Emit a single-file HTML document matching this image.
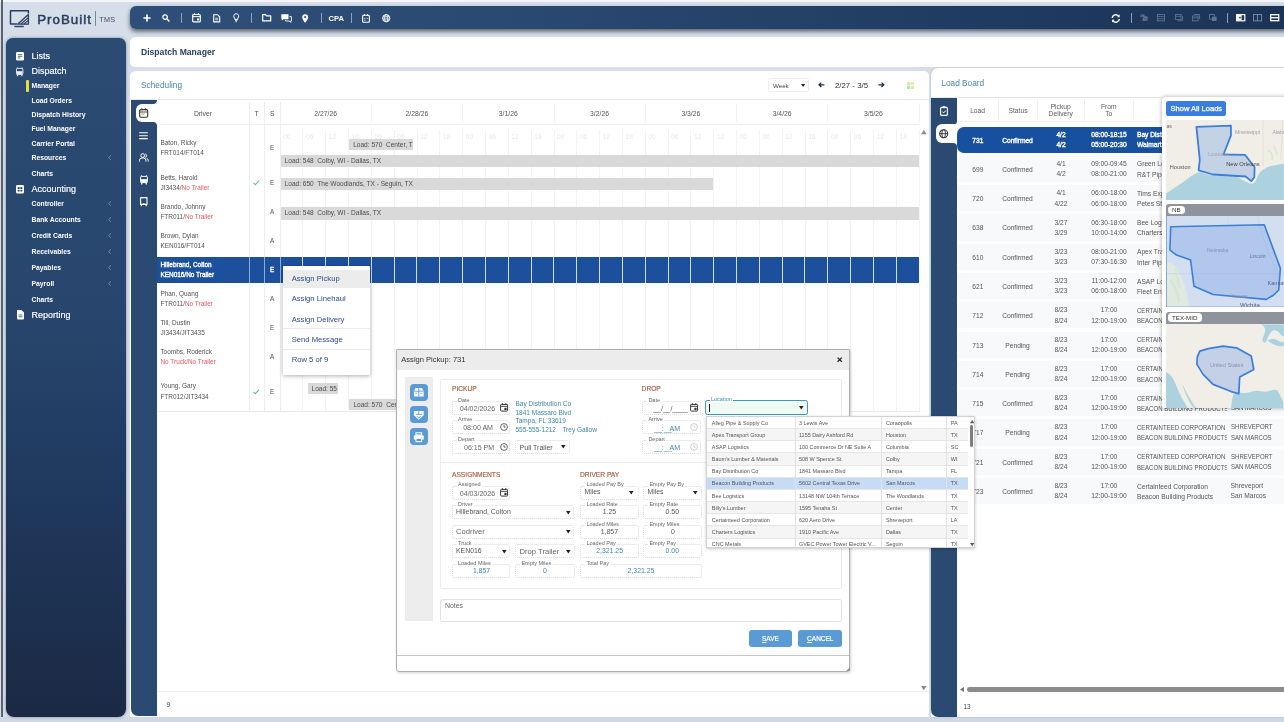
<!DOCTYPE html>
<html lang="en"><head><meta charset="utf-8"><title>ProBuilt TMS - Dispatch Manager</title>
<style>
html,body{margin:0;padding:0;}
html{overflow:hidden;background:#d6dee9;}
body{width:1284px;height:722px;overflow:hidden;position:relative;background:#d6dee9;font-family:"Liberation Sans",sans-serif;filter:blur(0.35px);}
.t{position:absolute;white-space:nowrap;}
.b{position:absolute;box-sizing:border-box;}
svg{position:absolute;overflow:visible;}
</style></head><body>
<div class="b" style="left:0px;top:0px;width:1284px;height:2px;background:#f4f6f9;"></div>
<div class="b" style="left:1px;top:0px;width:1.5px;height:722px;background:#5a6270;"></div>
<div class="b" style="left:0px;top:717px;width:1284px;height:5px;background:#cfd8e4;"></div>
<div class="b" style="left:130px;top:37px;width:1160px;height:29.5px;background:#fff;border-radius:5.5px 0 0 5.5px;"></div>
<div class="t" style="left:141px;top:46.30px;font-size:8.6px;line-height:12.6px;color:#2a4160;font-weight:700;">Dispatch Manager</div>
<svg style="left:9px;top:9px" width="22" height="19" viewBox="0 0 22 19">
<path d="M19.400 4.400V1.700H1.500v13.300h6.400" fill="none" stroke="#2a3f5f" stroke-width="1.5" stroke-linejoin="round"/>
<path d="M8.600 15.200L19.400 5.600v9.600z" fill="none" stroke="#2a3f5f" stroke-width="1.3" stroke-linejoin="round"/>
<path d="M12 15l7-6.200M15 15l4.200-3.700" stroke="#2a3f5f" stroke-width="1.1"/>
<path d="M5.400 17.500h9.400" stroke="#2a3f5f" stroke-width="1.4"/>
</svg>
<div class="t" style="left:37.2px;top:10.65px;font-size:13.3px;line-height:17.3px;color:#2a3f5f;font-weight:400;letter-spacing:1.02px;-webkit-text-stroke:0.5px #2a3f5f;">ProBuilt</div>
<div class="b" style="left:95.2px;top:11px;width:0.9px;height:14.6px;background:#7a8799;"></div>
<div class="t" style="left:99.3px;top:14.00px;font-size:7.2px;line-height:11.2px;color:#3a4c66;font-weight:400;letter-spacing:0.35px;">TMS</div>
<div class="b" style="left:6px;top:38px;width:119.8px;height:678.5px;background:linear-gradient(180deg,#2b4b73 0%,#28466d 40%,#203a60 64%,#1b2944 100%);border-radius:6.5px 6.5px 8px 8px;box-shadow:0 0 3px rgba(30,50,80,.5);"></div>
<div class="t" style="left:31.5px;top:49.90px;font-size:9.0px;line-height:13.0px;color:#fff;font-weight:400;-webkit-text-stroke:0.15px #fff;">Lists</div>
<svg style="left:16px;top:51.7px" width="8" height="8.6" viewBox="0 0 8 8.6"><rect x="0" y="0" width="8" height="8.6" rx="1.3" fill="#fff"/><path d="M1.8 2.6h4.4M1.8 4.3h4.4M1.8 6h2.6" stroke="#2b4c75" stroke-width=".8"/></svg>
<div class="t" style="left:31.5px;top:65.20px;font-size:9.0px;line-height:13.0px;color:#fff;font-weight:400;-webkit-text-stroke:0.15px #fff;">Dispatch</div>
<svg style="left:16.3px;top:66.7px" width="7.4" height="9.6" viewBox="0 0 7.4 9.6"><path d="M1.2 0.3v1.2M6.2 0.3v1.2" stroke="#dfe6f0" stroke-width=".8"/><rect x=".5" y="1.4" width="6.4" height="6.2" rx=".8" fill="none" stroke="#e8edf5" stroke-width=".9"/><path d="M.6 4.6h6.2" stroke="#e8edf5" stroke-width=".9"/><rect x=".9" y="4.8" width="5.6" height="2.6" fill="#e8edf5"/><path d="M1.5 7.6v1.7M5.9 7.6v1.7" stroke="#e8edf5" stroke-width="1.1"/></svg>
<div class="t" style="left:31.5px;top:182.90px;font-size:9.0px;line-height:13.0px;color:#fff;font-weight:400;-webkit-text-stroke:0.15px #fff;">Accounting</div>
<svg style="left:16px;top:184.7px" width="8" height="8.6" viewBox="0 0 8 8.6"><rect x="0" y="0" width="8" height="8.6" rx="1.5" fill="#fff"/><path d="M1.700 2h1.900v1.900H1.700zM4.400 2h1.900v1.900H4.400zM1.700 4.700h1.900v1.900H1.700zM4.400 4.700h1.900v1.900H4.400z" fill="#2b4c75"/></svg>
<div class="t" style="left:31.5px;top:309.10px;font-size:9.0px;line-height:13.0px;color:#fff;font-weight:400;-webkit-text-stroke:0.15px #fff;">Reporting</div>
<svg style="left:16.6px;top:310.4px" width="7" height="9.4" viewBox="0 0 7 9.4"><path d="M.8 0h3.6L7 2.6v6A.8.8 0 0 1 6.2 9.4H.8A.8.8 0 0 1 0 8.6V.8A.8.8 0 0 1 .8 0z" fill="#fff"/><path d="M1.6 5h3.8M1.6 6.8h3.8" stroke="#2b4c75" stroke-width=".8"/></svg>
<div class="t" style="left:31.5px;top:81.40px;font-size:6.8px;line-height:10.8px;color:#fff;font-weight:700;">Manager</div>
<div class="t" style="left:31.5px;top:95.60px;font-size:6.8px;line-height:10.8px;color:#fff;font-weight:700;">Load Orders</div>
<div class="t" style="left:31.5px;top:110.00px;font-size:6.8px;line-height:10.8px;color:#fff;font-weight:700;">Dispatch History</div>
<div class="t" style="left:31.5px;top:124.20px;font-size:6.8px;line-height:10.8px;color:#fff;font-weight:700;">Fuel Manager</div>
<div class="t" style="left:31.5px;top:138.60px;font-size:6.8px;line-height:10.8px;color:#fff;font-weight:700;">Carrier Portal</div>
<div class="t" style="left:31.5px;top:153.20px;font-size:6.8px;line-height:10.8px;color:#fff;font-weight:700;">Resources</div>
<svg style="left:108.3px;top:155.20000000000002px" width="3.4" height="5.2" viewBox="0 0 3.4 5.2"><path d="M2.9 .4L.6 2.6l2.3 2.2" fill="none" stroke="#7f93b3" stroke-width=".9"/></svg>
<div class="t" style="left:31.5px;top:169.40px;font-size:6.8px;line-height:10.8px;color:#fff;font-weight:700;">Charts</div>
<div class="t" style="left:31.5px;top:199.40px;font-size:6.8px;line-height:10.8px;color:#fff;font-weight:700;">Controller</div>
<svg style="left:108.3px;top:201.4px" width="3.4" height="5.2" viewBox="0 0 3.4 5.2"><path d="M2.9 .4L.6 2.6l2.3 2.2" fill="none" stroke="#7f93b3" stroke-width=".9"/></svg>
<div class="t" style="left:31.5px;top:215.40px;font-size:6.8px;line-height:10.8px;color:#fff;font-weight:700;">Bank Accounts</div>
<svg style="left:108.3px;top:217.4px" width="3.4" height="5.2" viewBox="0 0 3.4 5.2"><path d="M2.9 .4L.6 2.6l2.3 2.2" fill="none" stroke="#7f93b3" stroke-width=".9"/></svg>
<div class="t" style="left:31.5px;top:231.20px;font-size:6.8px;line-height:10.8px;color:#fff;font-weight:700;">Credit Cards</div>
<svg style="left:108.3px;top:233.20000000000002px" width="3.4" height="5.2" viewBox="0 0 3.4 5.2"><path d="M2.9 .4L.6 2.6l2.3 2.2" fill="none" stroke="#7f93b3" stroke-width=".9"/></svg>
<div class="t" style="left:31.5px;top:247.10px;font-size:6.8px;line-height:10.8px;color:#fff;font-weight:700;">Receivables</div>
<svg style="left:108.3px;top:249.1px" width="3.4" height="5.2" viewBox="0 0 3.4 5.2"><path d="M2.9 .4L.6 2.6l2.3 2.2" fill="none" stroke="#7f93b3" stroke-width=".9"/></svg>
<div class="t" style="left:31.5px;top:263.10px;font-size:6.8px;line-height:10.8px;color:#fff;font-weight:700;">Payables</div>
<svg style="left:108.3px;top:265.09999999999997px" width="3.4" height="5.2" viewBox="0 0 3.4 5.2"><path d="M2.9 .4L.6 2.6l2.3 2.2" fill="none" stroke="#7f93b3" stroke-width=".9"/></svg>
<div class="t" style="left:31.5px;top:279.10px;font-size:6.8px;line-height:10.8px;color:#fff;font-weight:700;">Payroll</div>
<svg style="left:108.3px;top:281.09999999999997px" width="3.4" height="5.2" viewBox="0 0 3.4 5.2"><path d="M2.9 .4L.6 2.6l2.3 2.2" fill="none" stroke="#7f93b3" stroke-width=".9"/></svg>
<div class="t" style="left:31.5px;top:295.40px;font-size:6.8px;line-height:10.8px;color:#fff;font-weight:700;">Charts</div>
<div class="b" style="left:26px;top:80px;width:2.6px;height:12px;background:#e6e13a;border-radius:1px;"></div>
<div class="b" style="left:130px;top:6px;width:1160px;height:22.7px;background:linear-gradient(90deg,#2e4f79 0%,#2a4970 35%,#203c62 70%,#1b3456 100%);border-radius:6px 0 0 6px;box-shadow:0 2.5px 4px rgba(60,66,78,.8);"></div>
<svg style="left:143.00px;top:14.00px" width="8" height="8" viewBox="0 0 8 8"><path d="M4 .4v7.2M.4 4h7.2" stroke="#fff" stroke-width="1.7"/></svg>
<svg style="left:162.30px;top:13.60px" width="8" height="8" viewBox="0 0 8 8"><circle cx="3.1" cy="3.1" r="2.2" fill="none" stroke="#fff" stroke-width="1.2"/><path d="M4.8 4.8l2.6 2.6" stroke="#fff" stroke-width="1.4"/></svg>
<div class="b" style="left:180.9px;top:13px;width:0.9px;height:9.6px;background:#8fa0bb;"></div>
<div class="b" style="left:250.6px;top:13px;width:0.9px;height:9.6px;background:#8fa0bb;"></div>
<div class="b" style="left:320.6px;top:13px;width:0.9px;height:9.6px;background:#8fa0bb;"></div>
<div class="b" style="left:350.90000000000003px;top:13px;width:0.9px;height:9.6px;background:#8fa0bb;"></div>
<svg style="left:191.80px;top:13.00px" width="9" height="9.6" viewBox="0 0 9 9.6"><rect x=".7" y="1.5" width="7.6" height="7.4" rx="1" fill="none" stroke="#fff" stroke-width="1.2"/><path d="M.7 3.6h7.6" stroke="#fff" stroke-width="1"/><path d="M2.6 .3v1.8M6.4 .3v1.8" stroke="#fff" stroke-width="1.1"/><rect x="5" y="5.4" width="2" height="2" fill="#fff"/></svg>
<svg style="left:212.60px;top:13.70px" width="7.4" height="8.6" viewBox="0 0 7.4 8.6"><path d="M.7 .7h3.9l2.1 2.1v5.1H.7z" fill="none" stroke="#fff" stroke-width="1.1"/><path d="M2.2 4.2h3M2.2 5.8h3" stroke="#fff" stroke-width=".8"/></svg>
<svg style="left:232.80px;top:13.30px" width="6.4" height="9.4" viewBox="0 0 6.4 9.4"><path d="M3.2 .7a2.5 2.5 0 0 1 1.5 4.5v1.2H1.7V5.2A2.5 2.5 0 0 1 3.2 .7z" fill="none" stroke="#fff" stroke-width="1"/><path d="M2 7.6h2.4M2.4 8.8h1.6" stroke="#fff" stroke-width=".8"/></svg>
<svg style="left:261.60px;top:14.20px" width="9.4" height="7.6" viewBox="0 0 9.4 7.6"><path d="M.7 .7h2.9l1 1.2h4.1v5H.7z" fill="none" stroke="#fff" stroke-width="1.2" stroke-linejoin="round"/></svg>
<svg style="left:280.80px;top:13.70px" width="11" height="9" viewBox="0 0 11 9"><path d="M.3 .3h7.2v4.9H2.4L.9 6.6V5.2H.3z" fill="#fff"/><path d="M8.4 2.6h2v4.4h-.7v1.4L8.3 7H4.6v-.9" fill="none" stroke="#fff" stroke-width=".9"/></svg>
<svg style="left:302.20px;top:13.50px" width="6.4" height="9" viewBox="0 0 6.4 9"><path d="M3.2 .2a3 3 0 0 1 3 3c0 2.2-3 5.6-3 5.6S.2 5.4 .2 3.200a3 3 0 0 1 3-3z" fill="#fff"/><circle cx="3.2" cy="3.1" r="1.05" fill="#2a4970"/></svg>
<div class="t" style="left:336.3px;top:12.80px;font-size:7.6px;line-height:11.6px;color:#fff;font-weight:700;transform:translateX(-50%);">CPA</div>
<svg style="left:362.30px;top:13.60px" width="8" height="8.8" viewBox="0 0 8 8.8"><rect x=".6" y="1.2" width="6.8" height="7" rx="1" fill="none" stroke="#fff" stroke-width="1.1"/><path d="M2.4 .2v1.6M5.6 .2v1.6" stroke="#fff" stroke-width="1"/><path d="M2.2 4.4h1.2M4.6 4.4h1.2M2.2 6.2h1.2" stroke="#fff" stroke-width=".9"/></svg>
<svg style="left:382.10px;top:13.80px" width="8.4" height="8.4" viewBox="0 0 8.4 8.4"><circle cx="4.2" cy="4.2" r="3.6" fill="none" stroke="#fff" stroke-width="1"/><ellipse cx="4.2" cy="4.2" rx="1.6" ry="3.6" fill="none" stroke="#fff" stroke-width=".8"/><path d="M.6 4.2h7.2M1.2 2.4h6M1.2 6h6" stroke="#fff" stroke-width=".7"/></svg>
<svg style="left:1111.20px;top:13.50px" width="9.6" height="9" viewBox="0 0 9.6 9"><path d="M1.2 4a3.6 3.6 0 0 1 6.4-1.9" fill="none" stroke="#fff" stroke-width="1.4"/><path d="M8.6 .6v2.6H6z" fill="#fff"/><path d="M8.4 5a3.6 3.6 0 0 1-6.4 1.9" fill="none" stroke="#fff" stroke-width="1.4"/><path d="M1 8.400V5.800h2.600z" fill="#fff"/></svg>
<div class="b" style="left:1130.6px;top:13.2px;width:0.9px;height:9.4px;background:#8fa0bb;"></div>
<div class="b" style="left:1226.8px;top:13.2px;width:0.9px;height:9.4px;background:#8fa0bb;"></div>
<svg style="left:1140.00px;top:14.30px" width="8" height="7.4" viewBox="0 0 8 7.4"><path d="M.4 .6h4v2.400h-4zM2.600 2.200h5v4.800h-5z" fill="#5f7391"/><path d="M.4 .6l6.800 6.400" stroke="#1f3a60" stroke-width=".6"/></svg>
<svg style="left:1157.00px;top:14.30px" width="8" height="7.4" viewBox="0 0 8 7.4"><rect x=".5" y=".5" width="7" height="6.400" fill="none" stroke="#5f7391" stroke-width=".9"/><path d="M.5 2.600h7M.5 4.800h7" stroke="#5f7391" stroke-width=".8"/></svg>
<svg style="left:1174.60px;top:14.30px" width="8" height="7.4" viewBox="0 0 8 7.4"><rect x=".5" y=".5" width="5.600" height="5" fill="none" stroke="#5f7391" stroke-width=".9"/><path d="M.5 2.400h5.600" stroke="#5f7391" stroke-width=".8"/><path d="M2.400 6.800h5.200V2.200" fill="none" stroke="#5f7391" stroke-width=".9"/></svg>
<svg style="left:1192.00px;top:14.30px" width="8" height="7.4" viewBox="0 0 8 7.4"><path d="M2 .5h5.600v4.600" fill="none" stroke="#5f7391" stroke-width=".9"/><rect x=".5" y="2" width="5.600" height="4.900" fill="none" stroke="#5f7391" stroke-width=".9"/><path d="M.5 3.800h5.600" stroke="#5f7391" stroke-width=".8"/></svg>
<svg style="left:1209.40px;top:14.30px" width="8" height="7.4" viewBox="0 0 8 7.4"><rect x=".5" y=".5" width="4.800" height="4.600" fill="none" stroke="#5f7391" stroke-width=".9"/><rect x="3" y="2.800" width="4.600" height="4.200" fill="#5f7391"/></svg>
<svg style="left:1235.70px;top:14.30px" width="9.4" height="7.4" viewBox="0 0 9.4 7.4"><rect x=".6" y=".6" width="8.200" height="6.200" fill="none" stroke="#fff" stroke-width="1.2"/><rect x="1" y="1" width="4.600" height="5.400" fill="#fff"/><rect x="3.200" y="2.800" width="1.600" height="1.600" fill="#203c62"/></svg>
<svg style="left:1253.10px;top:14.30px" width="9" height="7.4" viewBox="0 0 9 7.4"><rect x=".5" y=".5" width="8" height="6.400" fill="none" stroke="#7c8da8" stroke-width=".9"/><path d="M4.500 .5v6.400" stroke="#7c8da8" stroke-width=".9"/></svg>
<svg style="left:1270.30px;top:14.30px" width="9.4" height="7.4" viewBox="0 0 9.4 7.4"><rect x=".7" y=".7" width="8" height="6" fill="none" stroke="#fff" stroke-width="1.3"/><path d="M.7 3.700h8" stroke="#fff" stroke-width="1.3"/></svg>
<div class="b" style="left:130px;top:70.6px;width:799.4px;height:646px;background:#fff;border-radius:6px 5px 0 0;"></div>
<div class="t" style="left:141px;top:79.45px;font-size:8.3px;line-height:12.3px;color:#4689a6;font-weight:400;">Scheduling</div>
<div class="b" style="left:130px;top:99.3px;width:799.4px;height:1px;background:#e4e8ed;"></div>
<div class="b" style="left:130.5px;top:100.2px;width:26.3px;height:616.3px;background:#2b4a72;border-radius:0 0 0 7px;"></div>
<div class="b" style="left:135.5px;top:104px;width:22px;height:18.4px;background:#fff;border-radius:6px 0 0 6px;"></div>
<svg style="left:152.8px;top:100.2px" width="4" height="3.8" viewBox="0 0 4 3.8"><path d="M0 3.800h4V0A4 3.800 0 0 1 0 3.800z" fill="#fff"/></svg>
<svg style="left:152.8px;top:122.4px" width="4" height="3.8" viewBox="0 0 4 3.8"><path d="M0 0h4v3.800A4 3.800 0 0 0 0 0z" fill="#fff"/></svg>
<svg style="left:138.90px;top:108.00px" width="9.4" height="10" viewBox="0 0 9.4 10"><rect x=".7" y="1.600" width="8" height="7.700" rx="1.200" fill="none" stroke="#3a3326" stroke-width="1.1"/><path d="M.7 4h8" stroke="#3a3326" stroke-width=".9"/><path d="M2.800 .3v2M6.600 .3v2" stroke="#3a3326" stroke-width="1"/><path d="M2.400 5.600h1.200v1.200H2.400zM4.200 5.600h1.200v1.200H4.200z" fill="#3a3326" opacity=".55"/></svg>
<svg style="left:139.00px;top:131.90px" width="9" height="7.4" viewBox="0 0 9 7.4"><path d="M.2 .8h8.600M.2 3.700h8.600M.2 6.600h8.600" stroke="#fff" stroke-width="1.1"/></svg>
<svg style="left:138.80px;top:153.10px" width="9.6" height="9" viewBox="0 0 9.6 9"><circle cx="3.700" cy="2.600" r="1.900" fill="none" stroke="#fff" stroke-width="1"/><path d="M.5 8.600V7.400a2.400 2.400 0 0 1 2.400-2.400h1.600a2.400 2.400 0 0 1 2.400 2.400v1.200" fill="none" stroke="#fff" stroke-width="1"/><path d="M6.300 .8a1.900 1.900 0 0 1 0 3.600M7.600 5.200a2.400 2.400 0 0 1 1.600 2.200v1.200" fill="none" stroke="#fff" stroke-width="1"/></svg>
<svg style="left:139.60px;top:174.60px" width="8" height="10" viewBox="0 0 8 10"><path d="M1.400 .2v1.400M6.600 .2v1.400" stroke="#fff" stroke-width=".9"/><rect x=".6" y="1.400" width="6.800" height="6.200" rx=".8" fill="none" stroke="#fff" stroke-width="1"/><path d="M.6 4.600h6.800" stroke="#fff" stroke-width=".9"/><rect x="1" y="4.800" width="6" height="2.600" fill="#fff"/><path d="M1.700 7.600v2M6.300 7.600v2" stroke="#fff" stroke-width="1.200"/></svg>
<svg style="left:139.80px;top:196.60px" width="7.6" height="9.6" viewBox="0 0 7.6 9.6"><path d="M.6 .6h6.400v6.800H.6z" fill="none" stroke="#fff" stroke-width="1.100" stroke-linejoin="round"/><path d="M1.400 7.400v1.800M6.200 7.400v1.800" stroke="#fff" stroke-width="1.100"/><path d="M2.600 7.400l1.200-1.200 1.200 1.200" fill="none" stroke="#fff" stroke-width=".8"/></svg>
<div class="b" style="left:768.3px;top:78.3px;width:40.7px;height:14px;background:#fff;border:1px solid #ebedf0;border-radius:2.5px;"></div>
<div class="t" style="left:773px;top:80.60px;font-size:6.2px;line-height:10.2px;color:#444;font-weight:400;">Week</div>
<svg style="left:801px;top:83.800px" width="4.200" height="3" viewBox="0 0 5 3.6"><path d="M0 0h5L2.500 3.600z" fill="#222"/></svg>
<svg style="left:818.2px;top:82.4px" width="6.8" height="5.6" viewBox="0 0 6.8 5.6"><path d="M6.400 2.800H1.400M3.300 .6L1 2.800l2.300 2.200" fill="none" stroke="#1c2f52" stroke-width="1.3"/></svg>
<svg style="left:878.2px;top:82.4px" width="6.8" height="5.6" viewBox="0 0 6.8 5.6"><path d="M.4 2.800h5M3.500 .6l2.300 2.200-2.300 2.200" fill="none" stroke="#1c2f52" stroke-width="1.3"/></svg>
<div class="t" style="left:851.5px;top:79.80px;font-size:7.8px;line-height:11.8px;color:#333;font-weight:400;transform:translateX(-50%);">2/27 - 3/5</div>
<svg style="left:907px;top:81.6px" width="7" height="7" viewBox="0 0 7 7"><rect x="0" y="0" width="3.200" height="3.200" fill="#d6e7a6"/><rect x="3.800" y="0" width="3.200" height="3.200" fill="#f5e7a3"/><rect x="0" y="3.800" width="3.200" height="3.200" fill="#b7e2b1"/><rect x="3.800" y="3.800" width="3.200" height="3.200" fill="#d9eab0"/></svg>
<div class="b" style="left:157px;top:124.2px;width:762.5px;height:0.9px;background:#eff1f3;"></div>
<div class="t" style="left:203px;top:108.70px;font-size:6.8px;line-height:10.8px;color:#555;font-weight:400;transform:translateX(-50%);">Driver</div>
<div class="t" style="left:256.7px;top:108.70px;font-size:6.8px;line-height:10.8px;color:#555;font-weight:400;transform:translateX(-50%);">T</div>
<div class="t" style="left:272.2px;top:108.70px;font-size:6.8px;line-height:10.8px;color:#555;font-weight:400;transform:translateX(-50%);">S</div>
<div class="t" style="left:325.65px;top:108.70px;font-size:6.8px;line-height:10.8px;color:#555;font-weight:400;transform:translateX(-50%);">2/27/26</div>
<div class="t" style="left:416.95px;top:108.70px;font-size:6.8px;line-height:10.8px;color:#555;font-weight:400;transform:translateX(-50%);">2/28/26</div>
<div class="t" style="left:508.25px;top:108.70px;font-size:6.8px;line-height:10.8px;color:#555;font-weight:400;transform:translateX(-50%);">3/1/26</div>
<div class="t" style="left:599.55px;top:108.70px;font-size:6.8px;line-height:10.8px;color:#555;font-weight:400;transform:translateX(-50%);">3/2/26</div>
<div class="t" style="left:690.8499999999999px;top:108.70px;font-size:6.8px;line-height:10.8px;color:#555;font-weight:400;transform:translateX(-50%);">3/3/26</div>
<div class="t" style="left:782.15px;top:108.70px;font-size:6.8px;line-height:10.8px;color:#555;font-weight:400;transform:translateX(-50%);">3/4/26</div>
<div class="t" style="left:873.4499999999999px;top:108.70px;font-size:6.8px;line-height:10.8px;color:#555;font-weight:400;transform:translateX(-50%);">3/5/26</div>
<div class="b" style="left:248.6px;top:102px;width:0.9px;height:309px;background:#eceef1;"></div>
<div class="b" style="left:263.90000000000003px;top:102px;width:0.9px;height:309px;background:#eceef1;"></div>
<div class="b" style="left:279.6px;top:102px;width:0.9px;height:309px;background:#eceef1;"></div>
<div class="b" style="left:370.90000000000003px;top:104px;width:0.9px;height:18px;background:#eef0f2;"></div>
<div class="b" style="left:462.20000000000005px;top:104px;width:0.9px;height:18px;background:#eef0f2;"></div>
<div class="b" style="left:553.5px;top:104px;width:0.9px;height:18px;background:#eef0f2;"></div>
<div class="b" style="left:644.8000000000001px;top:104px;width:0.9px;height:18px;background:#eef0f2;"></div>
<div class="b" style="left:736.1px;top:104px;width:0.9px;height:18px;background:#eef0f2;"></div>
<div class="b" style="left:827.4px;top:104px;width:0.9px;height:18px;background:#eef0f2;"></div>
<div class="b" style="left:918.7px;top:104px;width:0.9px;height:18px;background:#eef0f2;"></div>
<div class="b" style="left:302.425px;top:130px;width:0.9px;height:281px;background:#f3f3f5;"></div>
<div class="b" style="left:325.25px;top:130px;width:0.9px;height:281px;background:#f3f3f5;"></div>
<div class="b" style="left:348.07500000000005px;top:130px;width:0.9px;height:281px;background:#f3f3f5;"></div>
<div class="b" style="left:370.90000000000003px;top:130px;width:0.9px;height:281px;background:#f3f3f5;"></div>
<div class="b" style="left:393.725px;top:130px;width:0.9px;height:281px;background:#f3f3f5;"></div>
<div class="b" style="left:416.55px;top:130px;width:0.9px;height:281px;background:#f3f3f5;"></div>
<div class="b" style="left:439.375px;top:130px;width:0.9px;height:281px;background:#f3f3f5;"></div>
<div class="b" style="left:462.20000000000005px;top:130px;width:0.9px;height:281px;background:#f3f3f5;"></div>
<div class="b" style="left:485.025px;top:130px;width:0.9px;height:281px;background:#f3f3f5;"></div>
<div class="b" style="left:507.85px;top:130px;width:0.9px;height:281px;background:#f3f3f5;"></div>
<div class="b" style="left:530.6750000000001px;top:130px;width:0.9px;height:281px;background:#f3f3f5;"></div>
<div class="b" style="left:553.5px;top:130px;width:0.9px;height:281px;background:#f3f3f5;"></div>
<div class="b" style="left:576.3249999999999px;top:130px;width:0.9px;height:281px;background:#f3f3f5;"></div>
<div class="b" style="left:599.15px;top:130px;width:0.9px;height:281px;background:#f3f3f5;"></div>
<div class="b" style="left:621.975px;top:130px;width:0.9px;height:281px;background:#f3f3f5;"></div>
<div class="b" style="left:644.8000000000001px;top:130px;width:0.9px;height:281px;background:#f3f3f5;"></div>
<div class="b" style="left:667.625px;top:130px;width:0.9px;height:281px;background:#f3f3f5;"></div>
<div class="b" style="left:690.4499999999999px;top:130px;width:0.9px;height:281px;background:#f3f3f5;"></div>
<div class="b" style="left:713.275px;top:130px;width:0.9px;height:281px;background:#f3f3f5;"></div>
<div class="b" style="left:736.1px;top:130px;width:0.9px;height:281px;background:#f3f3f5;"></div>
<div class="b" style="left:758.9250000000001px;top:130px;width:0.9px;height:281px;background:#f3f3f5;"></div>
<div class="b" style="left:781.75px;top:130px;width:0.9px;height:281px;background:#f3f3f5;"></div>
<div class="b" style="left:804.575px;top:130px;width:0.9px;height:281px;background:#f3f3f5;"></div>
<div class="b" style="left:827.4px;top:130px;width:0.9px;height:281px;background:#f3f3f5;"></div>
<div class="b" style="left:850.225px;top:130px;width:0.9px;height:281px;background:#f3f3f5;"></div>
<div class="b" style="left:873.05px;top:130px;width:0.9px;height:281px;background:#f3f3f5;"></div>
<div class="b" style="left:895.875px;top:130px;width:0.9px;height:281px;background:#f3f3f5;"></div>
<div class="b" style="left:918.7px;top:130px;width:0.9px;height:281px;background:#f3f3f5;"></div>
<div class="t" style="left:283.2px;top:132.30px;font-size:6.6px;line-height:10.6px;color:#e6e8ec;font-weight:400;">00</div>
<div class="t" style="left:306.025px;top:132.30px;font-size:6.6px;line-height:10.6px;color:#e6e8ec;font-weight:400;">06</div>
<div class="t" style="left:328.84999999999997px;top:132.30px;font-size:6.6px;line-height:10.6px;color:#e6e8ec;font-weight:400;">12</div>
<div class="t" style="left:351.675px;top:132.30px;font-size:6.6px;line-height:10.6px;color:#e6e8ec;font-weight:400;">18</div>
<div class="t" style="left:374.5px;top:132.30px;font-size:6.6px;line-height:10.6px;color:#e6e8ec;font-weight:400;">00</div>
<div class="t" style="left:397.325px;top:132.30px;font-size:6.6px;line-height:10.6px;color:#e6e8ec;font-weight:400;">06</div>
<div class="t" style="left:420.15px;top:132.30px;font-size:6.6px;line-height:10.6px;color:#e6e8ec;font-weight:400;">12</div>
<div class="t" style="left:442.97499999999997px;top:132.30px;font-size:6.6px;line-height:10.6px;color:#e6e8ec;font-weight:400;">18</div>
<div class="t" style="left:465.8px;top:132.30px;font-size:6.6px;line-height:10.6px;color:#e6e8ec;font-weight:400;">00</div>
<div class="t" style="left:488.62499999999994px;top:132.30px;font-size:6.6px;line-height:10.6px;color:#e6e8ec;font-weight:400;">06</div>
<div class="t" style="left:511.45px;top:132.30px;font-size:6.6px;line-height:10.6px;color:#e6e8ec;font-weight:400;">12</div>
<div class="t" style="left:534.2750000000001px;top:132.30px;font-size:6.6px;line-height:10.6px;color:#e6e8ec;font-weight:400;">18</div>
<div class="t" style="left:557.1px;top:132.30px;font-size:6.6px;line-height:10.6px;color:#e6e8ec;font-weight:400;">00</div>
<div class="t" style="left:579.925px;top:132.30px;font-size:6.6px;line-height:10.6px;color:#e6e8ec;font-weight:400;">06</div>
<div class="t" style="left:602.75px;top:132.30px;font-size:6.6px;line-height:10.6px;color:#e6e8ec;font-weight:400;">12</div>
<div class="t" style="left:625.575px;top:132.30px;font-size:6.6px;line-height:10.6px;color:#e6e8ec;font-weight:400;">18</div>
<div class="t" style="left:648.4000000000001px;top:132.30px;font-size:6.6px;line-height:10.6px;color:#e6e8ec;font-weight:400;">00</div>
<div class="t" style="left:671.225px;top:132.30px;font-size:6.6px;line-height:10.6px;color:#e6e8ec;font-weight:400;">06</div>
<div class="t" style="left:694.05px;top:132.30px;font-size:6.6px;line-height:10.6px;color:#e6e8ec;font-weight:400;">12</div>
<div class="t" style="left:716.875px;top:132.30px;font-size:6.6px;line-height:10.6px;color:#e6e8ec;font-weight:400;">18</div>
<div class="t" style="left:739.7px;top:132.30px;font-size:6.6px;line-height:10.6px;color:#e6e8ec;font-weight:400;">00</div>
<div class="t" style="left:762.5250000000001px;top:132.30px;font-size:6.6px;line-height:10.6px;color:#e6e8ec;font-weight:400;">06</div>
<div class="t" style="left:785.35px;top:132.30px;font-size:6.6px;line-height:10.6px;color:#e6e8ec;font-weight:400;">12</div>
<div class="t" style="left:808.1750000000001px;top:132.30px;font-size:6.6px;line-height:10.6px;color:#e6e8ec;font-weight:400;">18</div>
<div class="t" style="left:831.0px;top:132.30px;font-size:6.6px;line-height:10.6px;color:#e6e8ec;font-weight:400;">00</div>
<div class="t" style="left:853.825px;top:132.30px;font-size:6.6px;line-height:10.6px;color:#e6e8ec;font-weight:400;">06</div>
<div class="t" style="left:876.65px;top:132.30px;font-size:6.6px;line-height:10.6px;color:#e6e8ec;font-weight:400;">12</div>
<div class="t" style="left:899.475px;top:132.30px;font-size:6.6px;line-height:10.6px;color:#e6e8ec;font-weight:400;">18</div>
<div class="b" style="left:156.8px;top:257.2px;width:762.5px;height:26px;background:#1c4f9c;"></div>
<div class="b" style="left:248.9px;top:257.2px;width:0.9px;height:26px;background:#8fabd6;"></div>
<div class="b" style="left:264.2px;top:257.2px;width:0.9px;height:26px;background:#8fabd6;"></div>
<div class="b" style="left:279.9px;top:257.2px;width:0.9px;height:26px;background:#8fabd6;"></div>
<div class="b" style="left:302.325px;top:257.2px;width:1px;height:26px;background:#d3def0;"></div>
<div class="b" style="left:325.15px;top:257.2px;width:1px;height:26px;background:#d3def0;"></div>
<div class="b" style="left:347.975px;top:257.2px;width:1px;height:26px;background:#d3def0;"></div>
<div class="b" style="left:370.8px;top:257.2px;width:1px;height:26px;background:#d3def0;"></div>
<div class="b" style="left:393.625px;top:257.2px;width:1px;height:26px;background:#d3def0;"></div>
<div class="b" style="left:416.45px;top:257.2px;width:1px;height:26px;background:#d3def0;"></div>
<div class="b" style="left:439.275px;top:257.2px;width:1px;height:26px;background:#d3def0;"></div>
<div class="b" style="left:462.1px;top:257.2px;width:1px;height:26px;background:#d3def0;"></div>
<div class="b" style="left:484.92499999999995px;top:257.2px;width:1px;height:26px;background:#d3def0;"></div>
<div class="b" style="left:507.75px;top:257.2px;width:1px;height:26px;background:#d3def0;"></div>
<div class="b" style="left:530.575px;top:257.2px;width:1px;height:26px;background:#d3def0;"></div>
<div class="b" style="left:553.4px;top:257.2px;width:1px;height:26px;background:#d3def0;"></div>
<div class="b" style="left:576.2249999999999px;top:257.2px;width:1px;height:26px;background:#d3def0;"></div>
<div class="b" style="left:599.05px;top:257.2px;width:1px;height:26px;background:#d3def0;"></div>
<div class="b" style="left:621.875px;top:257.2px;width:1px;height:26px;background:#d3def0;"></div>
<div class="b" style="left:644.7px;top:257.2px;width:1px;height:26px;background:#d3def0;"></div>
<div class="b" style="left:667.525px;top:257.2px;width:1px;height:26px;background:#d3def0;"></div>
<div class="b" style="left:690.3499999999999px;top:257.2px;width:1px;height:26px;background:#d3def0;"></div>
<div class="b" style="left:713.175px;top:257.2px;width:1px;height:26px;background:#d3def0;"></div>
<div class="b" style="left:736.0px;top:257.2px;width:1px;height:26px;background:#d3def0;"></div>
<div class="b" style="left:758.825px;top:257.2px;width:1px;height:26px;background:#d3def0;"></div>
<div class="b" style="left:781.65px;top:257.2px;width:1px;height:26px;background:#d3def0;"></div>
<div class="b" style="left:804.475px;top:257.2px;width:1px;height:26px;background:#d3def0;"></div>
<div class="b" style="left:827.3px;top:257.2px;width:1px;height:26px;background:#d3def0;"></div>
<div class="b" style="left:850.125px;top:257.2px;width:1px;height:26px;background:#d3def0;"></div>
<div class="b" style="left:872.9499999999999px;top:257.2px;width:1px;height:26px;background:#d3def0;"></div>
<div class="b" style="left:895.775px;top:257.2px;width:1px;height:26px;background:#d3def0;"></div>
<div class="t" style="left:160.4px;top:138.18px;font-size:6.45px;line-height:10.45px;color:#525252;font-weight:400;">Baton, Ricky</div>
<div class="t" style="left:160.4px;top:148.38px;font-size:6.45px;line-height:10.45px;color:#525252;font-weight:400;">FRT014/FT014</div>
<div class="t" style="left:272.2px;top:143.30px;font-size:6.4px;line-height:10.4px;color:#525252;font-weight:400;transform:translateX(-50%);">E</div>
<div class="t" style="left:160.4px;top:172.68px;font-size:6.45px;line-height:10.45px;color:#525252;font-weight:400;">Betts, Harold</div>
<div class="t" style="left:160.4px;top:182.88px;font-size:6.45px;line-height:10.45px;color:#525252;font-weight:400;">JI3434/<span style="color:#e5565c">No Trailer</span></div>
<div class="t" style="left:272.2px;top:177.80px;font-size:6.4px;line-height:10.4px;color:#525252;font-weight:400;transform:translateX(-50%);">E</div>
<svg style="left:253.4px;top:179.9px" width="6.6" height="5.4" viewBox="0 0 6.6 5.4"><path d="M.5 2.900l1.900 1.800L6.100 .6" fill="none" stroke="#66c07f" stroke-width="1.1"/></svg>
<div class="t" style="left:160.4px;top:201.78px;font-size:6.45px;line-height:10.45px;color:#525252;font-weight:400;">Brando, Johnny</div>
<div class="t" style="left:160.4px;top:211.97px;font-size:6.45px;line-height:10.45px;color:#525252;font-weight:400;">FTR011/<span style="color:#e5565c">No Trailer</span></div>
<div class="t" style="left:272.2px;top:206.90px;font-size:6.4px;line-height:10.4px;color:#525252;font-weight:400;transform:translateX(-50%);">A</div>
<div class="t" style="left:160.4px;top:230.78px;font-size:6.45px;line-height:10.45px;color:#525252;font-weight:400;">Brown, Dylan</div>
<div class="t" style="left:160.4px;top:240.97px;font-size:6.45px;line-height:10.45px;color:#525252;font-weight:400;">KEN016/FT014</div>
<div class="t" style="left:272.2px;top:235.90px;font-size:6.4px;line-height:10.4px;color:#525252;font-weight:400;transform:translateX(-50%);">A</div>
<div class="t" style="left:160.4px;top:260.17px;font-size:6.45px;line-height:10.45px;color:#fff;font-weight:400;-webkit-text-stroke:0.35px #fff;">Hillebrand, Colton</div>
<div class="t" style="left:160.4px;top:270.37px;font-size:6.45px;line-height:10.45px;color:#fff;font-weight:400;-webkit-text-stroke:0.35px #fff;">KEN016/No Trailer</div>
<div class="t" style="left:272.2px;top:265.30px;font-size:6.4px;line-height:10.4px;color:#fff;font-weight:400;transform:translateX(-50%);-webkit-text-stroke:0.35px #fff;">E</div>
<div class="t" style="left:160.4px;top:288.67px;font-size:6.45px;line-height:10.45px;color:#525252;font-weight:400;">Phan, Quang</div>
<div class="t" style="left:160.4px;top:298.87px;font-size:6.45px;line-height:10.45px;color:#525252;font-weight:400;">FTR011/<span style="color:#e5565c">No Trailer</span></div>
<div class="t" style="left:272.2px;top:293.80px;font-size:6.4px;line-height:10.4px;color:#525252;font-weight:400;transform:translateX(-50%);">A</div>
<div class="t" style="left:160.4px;top:317.67px;font-size:6.45px;line-height:10.45px;color:#525252;font-weight:400;">Till, Dustin</div>
<div class="t" style="left:160.4px;top:327.87px;font-size:6.45px;line-height:10.45px;color:#525252;font-weight:400;">JI3434/JIT3435</div>
<div class="t" style="left:272.2px;top:322.80px;font-size:6.4px;line-height:10.4px;color:#525252;font-weight:400;transform:translateX(-50%);">E</div>
<div class="t" style="left:160.4px;top:346.67px;font-size:6.45px;line-height:10.45px;color:#525252;font-weight:400;">Toombs, Roderick</div>
<div class="t" style="left:160.4px;top:356.87px;font-size:6.45px;line-height:10.45px;color:#525252;font-weight:400;"><span style="color:#e5565c">No Truck/No Trailer</span></div>
<div class="t" style="left:272.2px;top:351.80px;font-size:6.4px;line-height:10.4px;color:#525252;font-weight:400;transform:translateX(-50%);">A</div>
<div class="t" style="left:160.4px;top:381.37px;font-size:6.45px;line-height:10.45px;color:#525252;font-weight:400;">Young, Gary</div>
<div class="t" style="left:160.4px;top:391.57px;font-size:6.45px;line-height:10.45px;color:#525252;font-weight:400;">FTR012/JIT3434</div>
<div class="t" style="left:272.2px;top:386.50px;font-size:6.4px;line-height:10.4px;color:#525252;font-weight:400;transform:translateX(-50%);">E</div>
<svg style="left:253.4px;top:388.59999999999997px" width="6.6" height="5.4" viewBox="0 0 6.6 5.4"><path d="M.5 2.900l1.900 1.800L6.100 .6" fill="none" stroke="#66c07f" stroke-width="1.1"/></svg>
<div class="b" style="left:349.2px;top:138.5px;width:64.0px;height:11.900000000000006px;background:#d9d9d9;overflow:hidden;"><div class="t" style="left:4px;top:0;font-size:6.55px;line-height:11.900000000000006px;color:#4c4c4c;white-space:pre;">Load: 570  Center, TX - Dallas, TX</div></div>
<div class="b" style="left:280.6px;top:155px;width:638.4px;height:12px;background:#d9d9d9;overflow:hidden;"><div class="t" style="left:4px;top:0;font-size:6.55px;line-height:12px;color:#4c4c4c;white-space:pre;">Load: 548  Colby, WI - Dallas, TX</div></div>
<div class="b" style="left:280.6px;top:178.3px;width:432.9px;height:11.899999999999977px;background:#d9d9d9;overflow:hidden;"><div class="t" style="left:4px;top:0;font-size:6.55px;line-height:11.899999999999977px;color:#4c4c4c;white-space:pre;">Load: 650  The Woodlands, TX - Seguin, TX</div></div>
<div class="b" style="left:280.6px;top:207.4px;width:638.4px;height:12.199999999999989px;background:#d9d9d9;overflow:hidden;"><div class="t" style="left:4px;top:0;font-size:6.55px;line-height:12.199999999999989px;color:#4c4c4c;white-space:pre;">Load: 548  Colby, WI - Dallas, TX</div></div>
<div class="b" style="left:307.5px;top:383.2px;width:30.80000000000001px;height:11.0px;background:#d9d9d9;overflow:hidden;"><div class="t" style="left:4px;top:0;font-size:6.55px;line-height:11.0px;color:#4c4c4c;white-space:pre;">Load: 55</div></div>
<div class="b" style="left:349.4px;top:399px;width:70.60000000000002px;height:11.399999999999977px;background:#d9d9d9;overflow:hidden;"><div class="t" style="left:4px;top:0;font-size:6.55px;line-height:11.399999999999977px;color:#4c4c4c;white-space:pre;">Load: 570  Center, TX</div></div>
<div class="b" style="left:157px;top:410.6px;width:762.5px;height:0.9px;background:#e9ebee;"></div>
<svg style="left:920.700px;top:130.200px" width="5.6" height="4.2" viewBox="0 0 5.6 4.2"><path d="M0 4.200h5.600L2.800 0z" fill="#8a8a8a"/></svg>
<svg style="left:920.700px;top:686px" width="5.6" height="4.2" viewBox="0 0 5.6 4.2"><path d="M0 0h5.600L2.800 4.200z" fill="#8a8a8a"/></svg>
<div class="b" style="left:157px;top:691.3px;width:772.4px;height:0.9px;background:#eceef1;"></div>
<div class="t" style="left:166.6px;top:700.15px;font-size:6.5px;line-height:10.5px;color:#444;font-weight:400;">9</div>
<div class="b" style="left:930.8px;top:67.6px;width:360px;height:649px;background:#fff;border-radius:7px 0 0 0;box-shadow:0 0 1.5px rgba(120,135,160,.7);"></div>
<div class="t" style="left:941.3px;top:76.75px;font-size:8.3px;line-height:12.3px;color:#4689a6;font-weight:400;">Load Board</div>
<div class="b" style="left:931px;top:96.8px;width:360px;height:1px;background:#e4e8ed;"></div>
<div class="b" style="left:931.2px;top:97.6px;width:26px;height:619px;background:#2b4a72;border-radius:0 0 0 7px;"></div>
<div class="b" style="left:935.8px;top:124.3px;width:21.6px;height:18.4px;background:#fff;border-radius:6px 0 0 6px;"></div>
<svg style="left:953.2px;top:120.5px" width="4" height="3.8" viewBox="0 0 4 3.8"><path d="M0 3.800h4V0A4 3.800 0 0 1 0 3.800z" fill="#fff"/></svg>
<svg style="left:953.2px;top:142.7px" width="4" height="3.8" viewBox="0 0 4 3.8"><path d="M0 0h4v3.800A4 3.800 0 0 0 0 0z" fill="#fff"/></svg>
<svg style="left:940.00px;top:105.60px" width="8" height="10" viewBox="0 0 8 10"><rect x=".6" y="1.400" width="6.800" height="8" rx="1" fill="none" stroke="#fff" stroke-width="1.1"/><rect x="2.400" y=".3" width="3.200" height="2" rx=".5" fill="#fff"/><path d="M2.300 5.600l1.300 1.300 2.200-2.400" fill="none" stroke="#fff" stroke-width="1"/></svg>
<svg style="left:939.30px;top:128.50px" width="9.4" height="9.4" viewBox="0 0 9.4 9.4"><circle cx="4.700" cy="4.700" r="4" fill="none" stroke="#2d2d2d" stroke-width="1.05"/><ellipse cx="4.700" cy="4.700" rx="1.800" ry="4" fill="none" stroke="#2d2d2d" stroke-width=".9"/><path d="M.7 4.700h8" stroke="#2d2d2d" stroke-width=".9"/></svg>
<div class="t" style="left:977.6px;top:105.75px;font-size:6.7px;line-height:10.7px;color:#5a5a5a;font-weight:400;transform:translateX(-50%);">Load</div>
<div class="t" style="left:1018px;top:105.75px;font-size:6.7px;line-height:10.7px;color:#5a5a5a;font-weight:400;transform:translateX(-50%);">Status</div>
<div class="t" style="left:1060.7px;top:102.05px;font-size:6.7px;line-height:10.7px;color:#5a5a5a;font-weight:400;transform:translateX(-50%);">Pickup</div>
<div class="t" style="left:1060.7px;top:109.35px;font-size:6.7px;line-height:10.7px;color:#5a5a5a;font-weight:400;transform:translateX(-50%);">Delivery</div>
<div class="t" style="left:1108.7px;top:102.05px;font-size:6.7px;line-height:10.7px;color:#5a5a5a;font-weight:400;transform:translateX(-50%);">From</div>
<div class="t" style="left:1108.7px;top:109.35px;font-size:6.7px;line-height:10.7px;color:#5a5a5a;font-weight:400;transform:translateX(-50%);">To</div>
<div class="b" style="left:998.1px;top:100px;width:0.9px;height:21px;background:#eceef1;"></div>
<div class="b" style="left:1037.0px;top:100px;width:0.9px;height:21px;background:#eceef1;"></div>
<div class="b" style="left:1083.8999999999999px;top:100px;width:0.9px;height:21px;background:#eceef1;"></div>
<div class="b" style="left:1132.8999999999999px;top:100px;width:0.9px;height:21px;background:#eceef1;"></div>
<div class="b" style="left:957.5px;top:121.2px;width:330px;height:0.9px;background:#eef0f3;"></div>
<div class="b" style="left:957.4px;top:127.2px;width:335px;height:25.7px;background:#1850a0;border-radius:7px 0 0 7px;"></div>
<div class="t" style="left:977.8px;top:135.58px;font-size:6.65px;line-height:10.65px;color:#fff;font-weight:400;transform:translateX(-50%);-webkit-text-stroke:0.35px #fff;">731</div>
<div class="t" style="left:1017.5px;top:135.58px;font-size:6.65px;line-height:10.65px;color:#fff;font-weight:400;transform:translateX(-50%);-webkit-text-stroke:0.35px #fff;">Confirmed</div>
<div class="t" style="left:1061px;top:129.68px;font-size:6.65px;line-height:10.65px;color:#fff;font-weight:400;transform:translateX(-50%);-webkit-text-stroke:0.35px #fff;">4/2</div>
<div class="t" style="left:1061px;top:139.98px;font-size:6.65px;line-height:10.65px;color:#fff;font-weight:400;transform:translateX(-50%);-webkit-text-stroke:0.35px #fff;">4/2</div>
<div class="t" style="left:1109px;top:129.68px;font-size:6.65px;line-height:10.65px;color:#fff;font-weight:400;transform:translateX(-50%);-webkit-text-stroke:0.35px #fff;">08:00-18:15</div>
<div class="t" style="left:1109px;top:139.98px;font-size:6.65px;line-height:10.65px;color:#fff;font-weight:400;transform:translateX(-50%);-webkit-text-stroke:0.35px #fff;">05:00-20:30</div>
<div class="b" style="left:1137px;top:129.2px;width:90px;height:22px;overflow:hidden;"><div class="t" style="left:0;top:0;font-size:6.65px;line-height:11.6px;color:#fff;-webkit-text-stroke:0.35px #fff;">Bay Distribution Co</div><div class="t" style="left:0;top:10.3px;font-size:6.65px;line-height:11.6px;color:#fff;-webkit-text-stroke:0.35px #fff;">Walmart DC</div></div>
<div class="t" style="left:1230.6px;top:129.68px;font-size:6.65px;line-height:10.65px;color:#fff;font-weight:400;-webkit-text-stroke:0.35px #fff;">Tampa</div>
<div class="t" style="left:1230.6px;top:139.98px;font-size:6.65px;line-height:10.65px;color:#fff;font-weight:400;-webkit-text-stroke:0.35px #fff;">Orlando</div>
<div class="b" style="left:957.5px;top:155.88px;width:335px;height:26.2px;background:#f8f9fb;"></div>
<div class="t" style="left:977.8px;top:164.86px;font-size:6.65px;line-height:10.65px;color:#555;font-weight:400;transform:translateX(-50%);">699</div>
<div class="t" style="left:1017.5px;top:164.86px;font-size:6.65px;line-height:10.65px;color:#555;font-weight:400;transform:translateX(-50%);">Confirmed</div>
<div class="t" style="left:1061px;top:158.96px;font-size:6.65px;line-height:10.65px;color:#555;font-weight:400;transform:translateX(-50%);">4/1</div>
<div class="t" style="left:1061px;top:169.26px;font-size:6.65px;line-height:10.65px;color:#555;font-weight:400;transform:translateX(-50%);">4/2</div>
<div class="t" style="left:1109px;top:158.96px;font-size:6.65px;line-height:10.65px;color:#555;font-weight:400;transform:translateX(-50%);">09:00-09:45</div>
<div class="t" style="left:1109px;top:169.26px;font-size:6.65px;line-height:10.65px;color:#555;font-weight:400;transform:translateX(-50%);">08:00-21:00</div>
<div class="b" style="left:1137px;top:158.48px;width:90px;height:22px;overflow:hidden;"><div class="t" style="left:0;top:0;font-size:6.65px;line-height:11.6px;color:#555;">Green Logistics</div><div class="t" style="left:0;top:10.3px;font-size:6.65px;line-height:11.6px;color:#555;">R&amp;T Pipe &amp; Supply</div></div>
<div class="t" style="left:1230.6px;top:158.96px;font-size:6.65px;line-height:10.65px;color:#555;font-weight:400;">Houston</div>
<div class="t" style="left:1230.6px;top:169.26px;font-size:6.65px;line-height:10.65px;color:#555;font-weight:400;">Dallas</div>
<div class="b" style="left:957.5px;top:185.16px;width:335px;height:26.2px;background:#f8f9fb;"></div>
<div class="t" style="left:977.8px;top:194.14px;font-size:6.65px;line-height:10.65px;color:#555;font-weight:400;transform:translateX(-50%);">720</div>
<div class="t" style="left:1017.5px;top:194.14px;font-size:6.65px;line-height:10.65px;color:#555;font-weight:400;transform:translateX(-50%);">Confirmed</div>
<div class="t" style="left:1061px;top:188.24px;font-size:6.65px;line-height:10.65px;color:#555;font-weight:400;transform:translateX(-50%);">4/1</div>
<div class="t" style="left:1061px;top:198.54px;font-size:6.65px;line-height:10.65px;color:#555;font-weight:400;transform:translateX(-50%);">4/22</div>
<div class="t" style="left:1109px;top:188.24px;font-size:6.65px;line-height:10.65px;color:#555;font-weight:400;transform:translateX(-50%);">06:00-18:00</div>
<div class="t" style="left:1109px;top:198.54px;font-size:6.65px;line-height:10.65px;color:#555;font-weight:400;transform:translateX(-50%);">06:00-18:00</div>
<div class="b" style="left:1137px;top:187.76px;width:90px;height:22px;overflow:hidden;"><div class="t" style="left:0;top:0;font-size:6.65px;line-height:11.6px;color:#555;">Tims Express</div><div class="t" style="left:0;top:10.3px;font-size:6.65px;line-height:11.6px;color:#555;">Petes Steel</div></div>
<div class="t" style="left:1230.6px;top:188.24px;font-size:6.65px;line-height:10.65px;color:#555;font-weight:400;">Center</div>
<div class="t" style="left:1230.6px;top:198.54px;font-size:6.65px;line-height:10.65px;color:#555;font-weight:400;">Seguin</div>
<div class="b" style="left:957.5px;top:214.44px;width:335px;height:26.2px;background:#f8f9fb;"></div>
<div class="t" style="left:977.8px;top:223.42px;font-size:6.65px;line-height:10.65px;color:#555;font-weight:400;transform:translateX(-50%);">638</div>
<div class="t" style="left:1017.5px;top:223.42px;font-size:6.65px;line-height:10.65px;color:#555;font-weight:400;transform:translateX(-50%);">Confirmed</div>
<div class="t" style="left:1061px;top:217.52px;font-size:6.65px;line-height:10.65px;color:#555;font-weight:400;transform:translateX(-50%);">3/27</div>
<div class="t" style="left:1061px;top:227.82px;font-size:6.65px;line-height:10.65px;color:#555;font-weight:400;transform:translateX(-50%);">3/29</div>
<div class="t" style="left:1109px;top:217.52px;font-size:6.65px;line-height:10.65px;color:#555;font-weight:400;transform:translateX(-50%);">06:30-18:00</div>
<div class="t" style="left:1109px;top:227.82px;font-size:6.65px;line-height:10.65px;color:#555;font-weight:400;transform:translateX(-50%);">10:00-14:00</div>
<div class="b" style="left:1137px;top:217.04px;width:90px;height:22px;overflow:hidden;"><div class="t" style="left:0;top:0;font-size:6.65px;line-height:11.6px;color:#555;">Bee Logistics</div><div class="t" style="left:0;top:10.3px;font-size:6.65px;line-height:11.6px;color:#555;">Charters Logistics</div></div>
<div class="t" style="left:1230.6px;top:217.52px;font-size:6.65px;line-height:10.65px;color:#555;font-weight:400;">The Woodlands</div>
<div class="t" style="left:1230.6px;top:227.82px;font-size:6.65px;line-height:10.65px;color:#555;font-weight:400;">Dallas</div>
<div class="b" style="left:957.5px;top:243.72px;width:335px;height:26.2px;background:#f8f9fb;"></div>
<div class="t" style="left:977.8px;top:252.70px;font-size:6.65px;line-height:10.65px;color:#555;font-weight:400;transform:translateX(-50%);">610</div>
<div class="t" style="left:1017.5px;top:252.70px;font-size:6.65px;line-height:10.65px;color:#555;font-weight:400;transform:translateX(-50%);">Confirmed</div>
<div class="t" style="left:1061px;top:246.80px;font-size:6.65px;line-height:10.65px;color:#555;font-weight:400;transform:translateX(-50%);">3/23</div>
<div class="t" style="left:1061px;top:257.09px;font-size:6.65px;line-height:10.65px;color:#555;font-weight:400;transform:translateX(-50%);">3/23</div>
<div class="t" style="left:1109px;top:246.80px;font-size:6.65px;line-height:10.65px;color:#555;font-weight:400;transform:translateX(-50%);">08:00-21:00</div>
<div class="t" style="left:1109px;top:257.09px;font-size:6.65px;line-height:10.65px;color:#555;font-weight:400;transform:translateX(-50%);">07:30-16:30</div>
<div class="b" style="left:1137px;top:246.32px;width:90px;height:22px;overflow:hidden;"><div class="t" style="left:0;top:0;font-size:6.65px;line-height:11.6px;color:#555;">Apex Transport Group</div><div class="t" style="left:0;top:10.3px;font-size:6.65px;line-height:11.6px;color:#555;">Inter Pipe</div></div>
<div class="t" style="left:1230.6px;top:246.80px;font-size:6.65px;line-height:10.65px;color:#555;font-weight:400;">Houston</div>
<div class="t" style="left:1230.6px;top:257.09px;font-size:6.65px;line-height:10.65px;color:#555;font-weight:400;">Colby</div>
<div class="b" style="left:957.5px;top:273.0px;width:335px;height:26.2px;background:#f8f9fb;"></div>
<div class="t" style="left:977.8px;top:281.97px;font-size:6.65px;line-height:10.65px;color:#555;font-weight:400;transform:translateX(-50%);">621</div>
<div class="t" style="left:1017.5px;top:281.97px;font-size:6.65px;line-height:10.65px;color:#555;font-weight:400;transform:translateX(-50%);">Confirmed</div>
<div class="t" style="left:1061px;top:276.07px;font-size:6.65px;line-height:10.65px;color:#555;font-weight:400;transform:translateX(-50%);">3/23</div>
<div class="t" style="left:1061px;top:286.37px;font-size:6.65px;line-height:10.65px;color:#555;font-weight:400;transform:translateX(-50%);">3/23</div>
<div class="t" style="left:1109px;top:276.07px;font-size:6.65px;line-height:10.65px;color:#555;font-weight:400;transform:translateX(-50%);">11:00-12:00</div>
<div class="t" style="left:1109px;top:286.37px;font-size:6.65px;line-height:10.65px;color:#555;font-weight:400;transform:translateX(-50%);">06:00-18:00</div>
<div class="b" style="left:1137px;top:275.59999999999997px;width:90px;height:22px;overflow:hidden;"><div class="t" style="left:0;top:0;font-size:6.65px;line-height:11.6px;color:#555;">ASAP Logistics</div><div class="t" style="left:0;top:10.3px;font-size:6.65px;line-height:11.6px;color:#555;">Fleet Enterprises</div></div>
<div class="t" style="left:1230.6px;top:276.07px;font-size:6.65px;line-height:10.65px;color:#555;font-weight:400;">Columbia</div>
<div class="t" style="left:1230.6px;top:286.37px;font-size:6.65px;line-height:10.65px;color:#555;font-weight:400;">Tampa</div>
<div class="b" style="left:957.5px;top:302.28000000000003px;width:335px;height:26.2px;background:#f8f9fb;"></div>
<div class="t" style="left:977.8px;top:311.25px;font-size:6.65px;line-height:10.65px;color:#555;font-weight:400;transform:translateX(-50%);">712</div>
<div class="t" style="left:1017.5px;top:311.25px;font-size:6.65px;line-height:10.65px;color:#555;font-weight:400;transform:translateX(-50%);">Confirmed</div>
<div class="t" style="left:1061px;top:305.36px;font-size:6.65px;line-height:10.65px;color:#555;font-weight:400;transform:translateX(-50%);">8/23</div>
<div class="t" style="left:1061px;top:315.65px;font-size:6.65px;line-height:10.65px;color:#555;font-weight:400;transform:translateX(-50%);">8/24</div>
<div class="t" style="left:1109px;top:305.36px;font-size:6.65px;line-height:10.65px;color:#555;font-weight:400;transform:translateX(-50%);">17:00</div>
<div class="t" style="left:1109px;top:315.65px;font-size:6.65px;line-height:10.65px;color:#555;font-weight:400;transform:translateX(-50%);">12:00-19:00</div>
<div class="b" style="left:1137px;top:304.88px;width:90px;height:22px;overflow:hidden;"><div class="t" style="left:0;top:0;font-size:6.65px;line-height:11.6px;color:#555;transform:scaleX(.91);transform-origin:0 50%;">CERTAINTEED CORPORATION</div><div class="t" style="left:0;top:10.3px;font-size:6.65px;line-height:11.6px;color:#555;transform:scaleX(.91);transform-origin:0 50%;">BEACON BUILDING PRODUCTS</div></div>
<div class="t" style="left:1230.6px;top:305.36px;font-size:6.65px;line-height:10.65px;color:#555;font-weight:400;transform:scaleX(.91);transform-origin:0 50%;">SHREVEPORT</div>
<div class="t" style="left:1230.6px;top:315.65px;font-size:6.65px;line-height:10.65px;color:#555;font-weight:400;transform:scaleX(.91);transform-origin:0 50%;">SAN MARCOS</div>
<div class="b" style="left:957.5px;top:331.56000000000006px;width:335px;height:26.2px;background:#f8f9fb;"></div>
<div class="t" style="left:977.8px;top:340.54px;font-size:6.65px;line-height:10.65px;color:#555;font-weight:400;transform:translateX(-50%);">713</div>
<div class="t" style="left:1017.5px;top:340.54px;font-size:6.65px;line-height:10.65px;color:#555;font-weight:400;transform:translateX(-50%);">Pending</div>
<div class="t" style="left:1061px;top:334.64px;font-size:6.65px;line-height:10.65px;color:#555;font-weight:400;transform:translateX(-50%);">8/23</div>
<div class="t" style="left:1061px;top:344.94px;font-size:6.65px;line-height:10.65px;color:#555;font-weight:400;transform:translateX(-50%);">8/24</div>
<div class="t" style="left:1109px;top:334.64px;font-size:6.65px;line-height:10.65px;color:#555;font-weight:400;transform:translateX(-50%);">17:00</div>
<div class="t" style="left:1109px;top:344.94px;font-size:6.65px;line-height:10.65px;color:#555;font-weight:400;transform:translateX(-50%);">12:00-19:00</div>
<div class="b" style="left:1137px;top:334.16px;width:90px;height:22px;overflow:hidden;"><div class="t" style="left:0;top:0;font-size:6.65px;line-height:11.6px;color:#555;transform:scaleX(.91);transform-origin:0 50%;">CERTAINTEED CORPORATION</div><div class="t" style="left:0;top:10.3px;font-size:6.65px;line-height:11.6px;color:#555;transform:scaleX(.91);transform-origin:0 50%;">BEACON BUILDING PRODUCTS</div></div>
<div class="t" style="left:1230.6px;top:334.64px;font-size:6.65px;line-height:10.65px;color:#555;font-weight:400;transform:scaleX(.91);transform-origin:0 50%;">SHREVEPORT</div>
<div class="t" style="left:1230.6px;top:344.94px;font-size:6.65px;line-height:10.65px;color:#555;font-weight:400;transform:scaleX(.91);transform-origin:0 50%;">SAN MARCOS</div>
<div class="b" style="left:957.5px;top:360.84000000000003px;width:335px;height:26.2px;background:#f8f9fb;"></div>
<div class="t" style="left:977.8px;top:369.81px;font-size:6.65px;line-height:10.65px;color:#555;font-weight:400;transform:translateX(-50%);">714</div>
<div class="t" style="left:1017.5px;top:369.81px;font-size:6.65px;line-height:10.65px;color:#555;font-weight:400;transform:translateX(-50%);">Pending</div>
<div class="t" style="left:1061px;top:363.92px;font-size:6.65px;line-height:10.65px;color:#555;font-weight:400;transform:translateX(-50%);">8/23</div>
<div class="t" style="left:1061px;top:374.21px;font-size:6.65px;line-height:10.65px;color:#555;font-weight:400;transform:translateX(-50%);">8/24</div>
<div class="t" style="left:1109px;top:363.92px;font-size:6.65px;line-height:10.65px;color:#555;font-weight:400;transform:translateX(-50%);">17:00</div>
<div class="t" style="left:1109px;top:374.21px;font-size:6.65px;line-height:10.65px;color:#555;font-weight:400;transform:translateX(-50%);">12:00-19:00</div>
<div class="b" style="left:1137px;top:363.44px;width:90px;height:22px;overflow:hidden;"><div class="t" style="left:0;top:0;font-size:6.65px;line-height:11.6px;color:#555;transform:scaleX(.91);transform-origin:0 50%;">CERTAINTEED CORPORATION</div><div class="t" style="left:0;top:10.3px;font-size:6.65px;line-height:11.6px;color:#555;transform:scaleX(.91);transform-origin:0 50%;">BEACON BUILDING PRODUCTS</div></div>
<div class="t" style="left:1230.6px;top:363.92px;font-size:6.65px;line-height:10.65px;color:#555;font-weight:400;transform:scaleX(.91);transform-origin:0 50%;">SHREVEPORT</div>
<div class="t" style="left:1230.6px;top:374.21px;font-size:6.65px;line-height:10.65px;color:#555;font-weight:400;transform:scaleX(.91);transform-origin:0 50%;">SAN MARCOS</div>
<div class="b" style="left:957.5px;top:390.12px;width:335px;height:26.2px;background:#f8f9fb;"></div>
<div class="t" style="left:977.8px;top:399.09px;font-size:6.65px;line-height:10.65px;color:#555;font-weight:400;transform:translateX(-50%);">715</div>
<div class="t" style="left:1017.5px;top:399.09px;font-size:6.65px;line-height:10.65px;color:#555;font-weight:400;transform:translateX(-50%);">Confirmed</div>
<div class="t" style="left:1061px;top:393.19px;font-size:6.65px;line-height:10.65px;color:#555;font-weight:400;transform:translateX(-50%);">8/23</div>
<div class="t" style="left:1061px;top:403.49px;font-size:6.65px;line-height:10.65px;color:#555;font-weight:400;transform:translateX(-50%);">8/24</div>
<div class="t" style="left:1109px;top:393.19px;font-size:6.65px;line-height:10.65px;color:#555;font-weight:400;transform:translateX(-50%);">17:00</div>
<div class="t" style="left:1109px;top:403.49px;font-size:6.65px;line-height:10.65px;color:#555;font-weight:400;transform:translateX(-50%);">12:00-19:00</div>
<div class="b" style="left:1137px;top:392.71999999999997px;width:90px;height:22px;overflow:hidden;"><div class="t" style="left:0;top:0;font-size:6.65px;line-height:11.6px;color:#555;transform:scaleX(.91);transform-origin:0 50%;">CERTAINTEED CORPORATION</div><div class="t" style="left:0;top:10.3px;font-size:6.65px;line-height:11.6px;color:#555;transform:scaleX(.91);transform-origin:0 50%;">BEACON BUILDING PRODUCTS</div></div>
<div class="t" style="left:1230.6px;top:393.19px;font-size:6.65px;line-height:10.65px;color:#555;font-weight:400;transform:scaleX(.91);transform-origin:0 50%;">SHREVEPORT</div>
<div class="t" style="left:1230.6px;top:403.49px;font-size:6.65px;line-height:10.65px;color:#555;font-weight:400;transform:scaleX(.91);transform-origin:0 50%;">SAN MARCOS</div>
<div class="b" style="left:957.5px;top:419.40000000000003px;width:335px;height:26.2px;background:#f8f9fb;"></div>
<div class="t" style="left:977.8px;top:428.38px;font-size:6.65px;line-height:10.65px;color:#555;font-weight:400;transform:translateX(-50%);">717</div>
<div class="t" style="left:1017.5px;top:428.38px;font-size:6.65px;line-height:10.65px;color:#555;font-weight:400;transform:translateX(-50%);">Pending</div>
<div class="t" style="left:1061px;top:422.48px;font-size:6.65px;line-height:10.65px;color:#555;font-weight:400;transform:translateX(-50%);">8/23</div>
<div class="t" style="left:1061px;top:432.77px;font-size:6.65px;line-height:10.65px;color:#555;font-weight:400;transform:translateX(-50%);">8/24</div>
<div class="t" style="left:1109px;top:422.48px;font-size:6.65px;line-height:10.65px;color:#555;font-weight:400;transform:translateX(-50%);">17:00</div>
<div class="t" style="left:1109px;top:432.77px;font-size:6.65px;line-height:10.65px;color:#555;font-weight:400;transform:translateX(-50%);">12:00-19:00</div>
<div class="b" style="left:1137px;top:422.0px;width:90px;height:22px;overflow:hidden;"><div class="t" style="left:0;top:0;font-size:6.65px;line-height:11.6px;color:#555;transform:scaleX(.91);transform-origin:0 50%;">CERTAINTEED CORPORATION</div><div class="t" style="left:0;top:10.3px;font-size:6.65px;line-height:11.6px;color:#555;transform:scaleX(.91);transform-origin:0 50%;">BEACON BUILDING PRODUCTS</div></div>
<div class="t" style="left:1230.6px;top:422.48px;font-size:6.65px;line-height:10.65px;color:#555;font-weight:400;transform:scaleX(.91);transform-origin:0 50%;">SHREVEPORT</div>
<div class="t" style="left:1230.6px;top:432.77px;font-size:6.65px;line-height:10.65px;color:#555;font-weight:400;transform:scaleX(.91);transform-origin:0 50%;">SAN MARCOS</div>
<div class="b" style="left:957.5px;top:448.68000000000006px;width:335px;height:26.2px;background:#f8f9fb;"></div>
<div class="t" style="left:977.8px;top:457.66px;font-size:6.65px;line-height:10.65px;color:#555;font-weight:400;transform:translateX(-50%);">721</div>
<div class="t" style="left:1017.5px;top:457.66px;font-size:6.65px;line-height:10.65px;color:#555;font-weight:400;transform:translateX(-50%);">Confirmed</div>
<div class="t" style="left:1061px;top:451.76px;font-size:6.65px;line-height:10.65px;color:#555;font-weight:400;transform:translateX(-50%);">8/23</div>
<div class="t" style="left:1061px;top:462.06px;font-size:6.65px;line-height:10.65px;color:#555;font-weight:400;transform:translateX(-50%);">8/24</div>
<div class="t" style="left:1109px;top:451.76px;font-size:6.65px;line-height:10.65px;color:#555;font-weight:400;transform:translateX(-50%);">17:00</div>
<div class="t" style="left:1109px;top:462.06px;font-size:6.65px;line-height:10.65px;color:#555;font-weight:400;transform:translateX(-50%);">12:00-19:00</div>
<div class="b" style="left:1137px;top:451.28000000000003px;width:90px;height:22px;overflow:hidden;"><div class="t" style="left:0;top:0;font-size:6.65px;line-height:11.6px;color:#555;transform:scaleX(.91);transform-origin:0 50%;">CERTAINTEED CORPORATION</div><div class="t" style="left:0;top:10.3px;font-size:6.65px;line-height:11.6px;color:#555;transform:scaleX(.91);transform-origin:0 50%;">BEACON BUILDING PRODUCTS</div></div>
<div class="t" style="left:1230.6px;top:451.76px;font-size:6.65px;line-height:10.65px;color:#555;font-weight:400;transform:scaleX(.91);transform-origin:0 50%;">SHREVEPORT</div>
<div class="t" style="left:1230.6px;top:462.06px;font-size:6.65px;line-height:10.65px;color:#555;font-weight:400;transform:scaleX(.91);transform-origin:0 50%;">SAN MARCOS</div>
<div class="b" style="left:957.5px;top:477.96000000000004px;width:335px;height:26.2px;background:#f8f9fb;"></div>
<div class="t" style="left:977.8px;top:486.94px;font-size:6.65px;line-height:10.65px;color:#555;font-weight:400;transform:translateX(-50%);">723</div>
<div class="t" style="left:1017.5px;top:486.94px;font-size:6.65px;line-height:10.65px;color:#555;font-weight:400;transform:translateX(-50%);">Confirmed</div>
<div class="t" style="left:1061px;top:481.04px;font-size:6.65px;line-height:10.65px;color:#555;font-weight:400;transform:translateX(-50%);">8/23</div>
<div class="t" style="left:1061px;top:491.33px;font-size:6.65px;line-height:10.65px;color:#555;font-weight:400;transform:translateX(-50%);">8/24</div>
<div class="t" style="left:1109px;top:481.04px;font-size:6.65px;line-height:10.65px;color:#555;font-weight:400;transform:translateX(-50%);">17:00</div>
<div class="t" style="left:1109px;top:491.33px;font-size:6.65px;line-height:10.65px;color:#555;font-weight:400;transform:translateX(-50%);">12:00-19:00</div>
<div class="b" style="left:1137px;top:480.56px;width:90px;height:22px;overflow:hidden;"><div class="t" style="left:0;top:0;font-size:6.65px;line-height:11.6px;color:#555;">Certainteed Corporation</div><div class="t" style="left:0;top:10.3px;font-size:6.65px;line-height:11.6px;color:#555;">Beacon Building Products</div></div>
<div class="t" style="left:1230.6px;top:481.04px;font-size:6.65px;line-height:10.65px;color:#555;font-weight:400;">Shreveport</div>
<div class="t" style="left:1230.6px;top:491.33px;font-size:6.65px;line-height:10.65px;color:#555;font-weight:400;">San Marcos</div>
<svg style="left:959.6px;top:687.2px" width="4" height="5" viewBox="0 0 4 5"><path d="M4 0v5L0 2.500z" fill="#777"/></svg>
<div class="b" style="left:967.4px;top:687.3px;width:330px;height:4.6px;background:#8c8c8c;border-radius:2.300px;"></div>
<div class="t" style="left:963.5px;top:701.75px;font-size:6.5px;line-height:10.5px;color:#444;font-weight:400;">13</div>
<div class="b" style="left:1161.6px;top:96.7px;width:130px;height:311.3px;background:#fff;box-shadow:0 0 4px rgba(0,0,0,.35);border-radius:3px 0 0 2px;"></div>
<div class="b" style="left:1166.1px;top:101.3px;width:60.4px;height:14.5px;background:#3a7de0;border-radius:2.6px;"></div>
<div class="t" style="left:1196.3px;top:103.12px;font-size:7.55px;line-height:11.55px;color:#fff;font-weight:400;transform:translateX(-50%);-webkit-text-stroke:0.25px #fff;">Show All Loads</div>
<svg style="left:1166.1px;top:120px;overflow:hidden" width="118" height="79.7" viewBox="1166.1 120 118 79.7">
<rect x="1166" y="120" width="119" height="80" fill="#f1eee7"/>
<path d="M1166 193.500C1173 189 1181 184 1188 178.500c4-3 8-5.500 12-6.500 5 2 10 3 15 3.200 5 .3 10 1.600 15 1.200 6-.4 10 1.800 14 4.200 3 1.600 6 3.800 9 2.800 3-1 3.500-4.500 5-8 2.500-4.500 7-7.600 12-9.200 5-1.400 9-1.200 14-2.700V200h-118z" fill="#abd2de"/>
<path d="M1263 120v46M1283 120l-2 40" stroke="#dcd6cd" stroke-width=".6" fill="none"/>
<path d="M1268 150c3 2 5 6 4 10M1274 146c2 3 3 6 3 9" stroke="#d6e6c9" stroke-width="1.600" fill="none" opacity=".8"/>
<path d="M1196.500 126.900L1231 125.700v10L1223.600 154.500l21.500.3 9.600 12.500-.3 10-3 3.800-5.800-4.600-32.400-2-14.500-4.200 1.200-10.500z" fill="rgba(70,130,225,.26)" stroke="#3b7fda" stroke-width="1.800" stroke-linejoin="round"/>
<text x="1180.300" y="168.900" font-size="5.600" fill="#555" text-anchor="middle" font-family="Liberation Sans, sans-serif">Houston</text>
<text x="1243" y="165.900" font-size="5.800" fill="#444" text-anchor="middle" font-family="Liberation Sans, sans-serif">New Orleans</text>
<text x="1247.600" y="134.200" font-size="5.200" fill="#a79db5" text-anchor="middle" font-family="Liberation Sans, sans-serif">Mississippi</text>
<text x="1272.500" y="134" font-size="5.200" fill="#a79db5" font-family="Liberation Sans, sans-serif">Alabama</text>
<text x="1166.600" y="127.600" font-size="5" fill="#666" font-family="Liberation Sans, sans-serif">as</text>
<text x="1218.500" y="156" font-size="4.800" fill="#a9a2b5" text-anchor="middle" font-family="Liberation Sans, sans-serif">Louisiana</text>
</svg>
<div class="b" style="left:1166.1px;top:204.1px;width:125px;height:12px;background:#8e939e;border-radius:3px 0 0 0;"></div>
<div class="b" style="left:1167.5px;top:205.5px;width:17.7px;height:8.2px;background:#fff;border-radius:3.5px;"></div>
<div class="t" style="left:1176.3px;top:204.80px;font-size:6.2px;line-height:10.2px;color:#333;font-weight:400;transform:translateX(-50%);">NB</div>
<svg style="left:1166.1px;top:215.8px;overflow:hidden" width="118" height="91.5" viewBox="1166.1 215.800 118 91.500">
<rect x="1166" y="215" width="119" height="93" fill="#d3dff1"/>
<path d="M1166 262c6 0 10 4 13 10 4 8 8 16 10 35h-23z" fill="#dfe8e1"/>
<path d="M1175 268c3 6 2 14 5 20M1170 280c4 4 8 12 9 22" stroke="#d2e6cf" stroke-width="2.400" fill="none" opacity=".8"/>
<path d="M1166 273.500h118M1228 216v10M1258 216c2 14 8 30 14 44 4 10 7 20 8 32" stroke="#c2cfe6" stroke-width=".6" fill="none"/>
<path d="M1170.800 226.600L1264.400 224.600l16.100 43.600-1.700 21.600-4.900 5-7.500 4.400-53.200-4.900-19.100-8.200-3.400-26.300-14.100-4.900-6.600-5z" fill="rgba(80,135,225,.26)" stroke="#3b7fda" stroke-width="1.600" stroke-linejoin="round"/>
<text x="1217.800" y="251.600" font-size="5" fill="#8f8fb0" text-anchor="middle" font-family="Liberation Sans, sans-serif">Nebraska</text>
<text x="1257.700" y="258.300" font-size="5" fill="#6d7690" text-anchor="middle" font-family="Liberation Sans, sans-serif">Lincoln</text>
<text x="1267.600" y="284.800" font-size="5.600" fill="#59627a" font-family="Liberation Sans, sans-serif">Kansas City</text>
<text x="1250" y="306.400" font-size="6" fill="#555c6a" text-anchor="middle" font-family="Liberation Sans, sans-serif">Wichita</text>
<text x="1240" y="298" font-size="4.600" fill="#8f8fb0" text-anchor="middle" font-family="Liberation Sans, sans-serif">Kansas</text>
<path d="M1166.500 215.800v91M1166.100 306.900h118" stroke="#6f9ada" stroke-width=".9" fill="none"/>
</svg>
<div class="b" style="left:1166.1px;top:312px;width:125px;height:11.8px;background:#8e939e;border-radius:3px 0 0 0;"></div>
<div class="b" style="left:1167.5px;top:313.4px;width:34.4px;height:8.2px;background:#fff;border-radius:3.5px;"></div>
<div class="t" style="left:1184.7px;top:312.80px;font-size:6.2px;line-height:10.2px;color:#333;font-weight:400;transform:translateX(-50%);">TEX-MID</div>
<svg style="left:1166.1px;top:323.6px;overflow:hidden" width="118" height="84.2" viewBox="1166.1 323.600 118 84.200">
<rect x="1166" y="323" width="119" height="86" fill="#f1eee7"/>
<path d="M1166 372c4 1 7 5 9 10 3 7 6 14 9 19 2 3 3 5 4 7h-22z" fill="#abd2de"/>
<path d="M1180 382c3 4 6 10 9 15 2 4 5 8 7 11h-5c-3-5-6-10-8-15-2-4-3-7-3-11z" fill="#f1eee7"/>
<path d="M1183 384c2 5 5 11 9 17 2 3 3 5 5 7h-3c-3-4-6-9-8-14-1-3-3-7-3-10z" fill="#abd2de" opacity=".9"/>
<path d="M1231 408c1-5 1-10 2.500-14 3-2.500 7-2 10-1.500 4 .7 7-1.500 11-2 5-.6 9 1.500 13 .5 4-1 7-2.500 10-1 2 3 4 7 6 12v6z" fill="#abd2de"/>
<path d="M1278 380c3 2 5 8 6 16v-18z" fill="#f1eee7"/>
<path d="M1261 324c3 1 5 4 4 8-1 3-3 6-2 9 1 2 3 1 4-1 1-4 3-8 6-10 3-1 5 1 7 3 1 2 3 3 4 2v-11z" fill="#abd2de"/>
<path d="M1268 340c3-2 7-2 10 0 2 1 4 2 6 1.500v4c-3 1-6 0-9-1-3-1-5-2.500-7-4.500z" fill="#abd2de"/>
<path d="M1199.900 350.700l8.300-2.500 15-2.500 13.300 1.700 14.900 8.300 2.500 13.300-14.100 7.500-.9 16.900-5.800-1.600-19.900-7.800-10-10-6.200-10 .4-7.500z" fill="rgba(70,130,225,.27)" stroke="#3b7fda" stroke-width="1.700" stroke-linejoin="round"/>
<text x="1226.800" y="366.700" font-size="5.600" fill="#8f8fb0" text-anchor="middle" font-family="Liberation Sans, sans-serif">United States</text>
</svg>
<div class="b" style="left:282.6px;top:266.2px;width:87.3px;height:108.5px;background:#fff;box-shadow:0 1px 4px rgba(0,0,0,.32);border-radius:1px;"></div>
<div class="b" style="left:282.6px;top:270.3px;width:87.3px;height:18px;background:#ececec;"></div>
<div class="t" style="left:291.7px;top:273.07px;font-size:7.65px;line-height:11.65px;color:#2d4a8c;font-weight:400;">Assign Pickup</div>
<div class="t" style="left:291.7px;top:293.34px;font-size:7.65px;line-height:11.65px;color:#2d4a8c;font-weight:400;">Assign Linehaul</div>
<div class="t" style="left:291.7px;top:313.62px;font-size:7.65px;line-height:11.65px;color:#2d4a8c;font-weight:400;">Assign Delivery</div>
<div class="t" style="left:291.7px;top:333.88px;font-size:7.65px;line-height:11.65px;color:#2d4a8c;font-weight:400;">Send Message</div>
<div class="t" style="left:291.7px;top:354.15px;font-size:7.65px;line-height:11.65px;color:#2d4a8c;font-weight:400;">Row 5 of 9</div>
<div class="b" style="left:282.6px;top:328.2px;width:87.3px;height:0.9px;background:#ebebeb;"></div>
<div class="b" style="left:282.6px;top:349px;width:87.3px;height:0.9px;background:#ebebeb;"></div>
<div class="b" style="left:396.3px;top:349.2px;width:454.2px;height:322.4px;background:#fff;border:1px solid #adadad;border-radius:1px 1px 3px 3px;box-shadow:1px 1px 3px rgba(0,0,0,.18);"></div>
<div class="b" style="left:397.3px;top:350.2px;width:452.2px;height:20px;background:#ececec;"></div>
<div class="t" style="left:401.3px;top:354.23px;font-size:7.55px;line-height:11.55px;color:#333;font-weight:400;">Assign Pickup: 731</div>
<svg style="left:836.8px;top:356.8px" width="5.4" height="5.4" viewBox="0 0 5.4 5.4"><path d="M.6 .6l4.200 4.200M4.800 .6L.6 4.800" stroke="#222" stroke-width="1.250"/></svg>
<div class="b" style="left:397.3px;top:655px;width:452.2px;height:0.9px;background:#c9c9c9;"></div>
<svg style="left:845.6px;top:666.6px" width="4" height="4" viewBox="0 0 4 4"><path d="M4 0v4H0z" fill="#9a9a9a"/></svg>
<div class="b" style="left:405.3px;top:377.4px;width:27.7px;height:244px;background:#ededed;"></div>
<div class="b" style="left:410px;top:383.6px;width:17.9px;height:17.4px;background:#5a9bd6;border-radius:4px;"></div>
<div class="b" style="left:410px;top:405.8px;width:17.9px;height:17.4px;background:#5a9bd6;border-radius:4px;"></div>
<div class="b" style="left:410px;top:427.9px;width:17.9px;height:17.4px;background:#5a9bd6;border-radius:4px;"></div>
<svg style="left:413.200px;top:387.400px" width="11.600" height="10.400" viewBox="0 0 10 9"><path d="M.8 3.600L2.200 .8h5.600l1.400 2.800v4.600H.8z" fill="#fff"/><path d="M5 .8v7.400M.8 3.600h8.400" stroke="#5a9bd6" stroke-width=".8"/><path d="M2 5.400h1.600M6.400 5.400H8" stroke="#5a9bd6" stroke-width=".7"/></svg>
<svg style="left:413.200px;top:409.600px" width="11.600" height="10.400" viewBox="0 0 10 9"><path d="M.8 .8h8.400v3.800L5 8.400.8 4.600z" fill="#fff"/><path d="M5 .8v3M2.400 3.800h5.200" stroke="#5a9bd6" stroke-width=".8"/><path d="M3.400 5.400L5 7l1.600-1.600" fill="none" stroke="#5a9bd6" stroke-width=".8"/></svg>
<svg style="left:413.200px;top:431.600px" width="11.600" height="10.400" viewBox="0 0 10 9"><path d="M2.600 .6h4.800v2H2.600z" fill="none" stroke="#fff" stroke-width=".9"/><rect x=".7" y="2.800" width="8.600" height="4" rx="1" fill="#fff"/><rect x="2.600" y="5.400" width="4.800" height="3" fill="#5a9bd6" stroke="#fff" stroke-width=".9"/></svg>
<div class="b" style="left:440.4px;top:379px;width:401.8px;height:210.4px;border:1px solid #ececec;border-radius:2px;"></div>
<div class="b" style="left:441.4px;top:462.4px;width:399.8px;height:0.9px;background:#ebebeb;"></div>
<div class="b" style="left:440.4px;top:598.5px;width:401.8px;height:23px;border:1px solid #e2e2e2;border-radius:2.5px;"></div>
<div class="t" style="left:445px;top:600.55px;font-size:6.9px;line-height:10.9px;color:#666;font-weight:400;">Notes</div>
<div class="b" style="left:748.8px;top:630px;width:43.2px;height:17.2px;background:#5a9bd6;border-radius:3px;"></div>
<div class="b" style="left:798.4px;top:630px;width:43.8px;height:17.2px;background:#5a9bd6;border-radius:3px;"></div>
<div class="t" style="left:770.4px;top:633.85px;font-size:6.5px;line-height:10.5px;color:#fff;font-weight:400;transform:translateX(-50%);-webkit-text-stroke:0.2px #fff;"><u>S</u>AVE</div>
<div class="t" style="left:820.3px;top:633.85px;font-size:6.5px;line-height:10.5px;color:#fff;font-weight:400;transform:translateX(-50%);-webkit-text-stroke:0.2px #fff;"><u>C</u>ANCEL</div>
<div class="t" style="left:452px;top:384.07px;font-size:6.65px;line-height:10.65px;color:#a25b3d;font-weight:400;-webkit-text-stroke:0.15px #a25b3d;">PICKUP</div>
<div class="t" style="left:641.6px;top:384.07px;font-size:6.65px;line-height:10.65px;color:#a25b3d;font-weight:400;-webkit-text-stroke:0.15px #a25b3d;">DROP</div>
<div class="t" style="left:452px;top:469.88px;font-size:6.65px;line-height:10.65px;color:#a25b3d;font-weight:400;-webkit-text-stroke:0.15px #a25b3d;">ASSIGNMENTS</div>
<div class="t" style="left:580px;top:469.88px;font-size:6.65px;line-height:10.65px;color:#a25b3d;font-weight:400;-webkit-text-stroke:0.15px #a25b3d;">DRIVER PAY</div>
<div class="b" style="left:451.6px;top:400.7px;width:58.69999999999999px;height:14.1px;border:1px dotted #dadada;border-radius:2.5px;background:#fff;"></div>
<div class="t" style="left:456.5px;top:396.5px;font-size:5.5px;line-height:6.4px;color:#666;background:#fff;padding:0 1.5px;">Date</div>
<div class="t" style="left:459.8px;top:403.07px;font-size:7.05px;line-height:11.05px;color:#666;font-weight:400;">04/02/2026</div>
<svg style="left:500.40px;top:403.10px" width="8.2" height="8.6" viewBox="0 0 8.2 8.6"><rect x=".6" y="1.400" width="7" height="6.700" rx=".8" fill="none" stroke="#333" stroke-width="1"/><path d="M.6 3.300h7" stroke="#333" stroke-width=".9"/><path d="M2.400 .2v1.800M5.800 .2v1.800" stroke="#333" stroke-width="1"/><rect x="4.400" y="4.800" width="2.200" height="2.200" fill="#333"/></svg>
<div class="b" style="left:451.6px;top:420.2px;width:58.69999999999999px;height:14.1px;border:1px dotted #dadada;border-radius:2.5px;background:#fff;"></div>
<div class="t" style="left:456.5px;top:416.0px;font-size:5.5px;line-height:6.4px;color:#666;background:#fff;padding:0 1.5px;">Arrive</div>
<div class="t" style="left:463.2px;top:422.38px;font-size:7.05px;line-height:11.05px;color:#666;font-weight:400;">08:00 AM</div>
<svg style="left:500.40px;top:423.30px" width="8" height="8" viewBox="0 0 8 8"><circle cx="4" cy="4" r="3.400" fill="none" stroke="#444" stroke-width=".8"/><path d="M4 2.100V4.200h1.500" fill="none" stroke="#444" stroke-width=".8"/></svg>
<div class="b" style="left:451.6px;top:440px;width:58.69999999999999px;height:14.1px;border:1px dotted #dadada;border-radius:2.5px;background:#fff;"></div>
<div class="t" style="left:456.5px;top:435.8px;font-size:5.5px;line-height:6.4px;color:#666;background:#fff;padding:0 1.5px;">Depart</div>
<div class="t" style="left:464px;top:441.77px;font-size:7.05px;line-height:11.05px;color:#666;font-weight:400;">06:15 PM</div>
<svg style="left:500.40px;top:442.90px" width="8" height="8" viewBox="0 0 8 8"><circle cx="4" cy="4" r="3.400" fill="none" stroke="#444" stroke-width=".8"/><path d="M4 2.100V4.200h1.500" fill="none" stroke="#444" stroke-width=".8"/></svg>
<div class="t" style="left:515.5px;top:399.35px;font-size:6.5px;line-height:10.5px;color:#4189a8;font-weight:400;">Bay Distribution Co</div>
<div class="t" style="left:515.5px;top:407.90px;font-size:6.5px;line-height:10.5px;color:#4189a8;font-weight:400;">1841 Massaro Blvd</div>
<div class="t" style="left:515.5px;top:416.45px;font-size:6.5px;line-height:10.5px;color:#4189a8;font-weight:400;">Tampa, FL 33619</div>
<div class="t" style="left:515.5px;top:425.00px;font-size:6.5px;line-height:10.5px;color:#4189a8;font-weight:400;">555-555-1212</div>
<div class="t" style="left:562.4px;top:425.00px;font-size:6.5px;line-height:10.5px;color:#4189a8;font-weight:400;">Trey Gallow</div>
<div class="b" style="left:515px;top:440px;width:54.60000000000002px;height:14.1px;border:1px dotted #dadada;border-radius:2.5px;background:#fff;"></div>
<div class="t" style="left:519.6px;top:441.80px;font-size:7px;line-height:11px;color:#555;font-weight:400;">Pull Trailer</div>
<svg style="left:560.6px;top:445.0px" width="4.600" height="3.400" viewBox="0 0 4.600 3.400"><path d="M0 0h4.600L2.300 3.400z" fill="#222"/></svg>
<div class="b" style="left:642px;top:400.7px;width:58.60000000000002px;height:14.1px;border:1px dotted #dadada;border-radius:2.5px;background:#fff;"></div>
<div class="t" style="left:646.9px;top:396.5px;font-size:5.5px;line-height:6.4px;color:#666;background:#fff;padding:0 1.5px;">Date</div>
<div class="t" style="left:653.3px;top:403.27px;font-size:7.05px;line-height:11.05px;color:#555;font-weight:400;letter-spacing:-0.1px;">__/__/____</div>
<svg style="left:690.20px;top:403.10px" width="8.2" height="8.6" viewBox="0 0 8.2 8.6"><rect x=".6" y="1.400" width="7" height="6.700" rx=".8" fill="none" stroke="#333" stroke-width="1"/><path d="M.6 3.300h7" stroke="#333" stroke-width=".9"/><path d="M2.400 .2v1.800M5.800 .2v1.800" stroke="#333" stroke-width="1"/><rect x="4.400" y="4.800" width="2.200" height="2.200" fill="#333"/></svg>
<div class="b" style="left:642px;top:420.2px;width:58.60000000000002px;height:14.1px;border:1px dotted #dadada;border-radius:2.5px;background:#fff;"></div>
<div class="t" style="left:646.9px;top:416.0px;font-size:5.5px;line-height:6.4px;color:#666;background:#fff;padding:0 1.5px;">Arrive</div>
<div class="t" style="left:654px;top:422.57px;font-size:7.05px;line-height:11.05px;color:#4189a8;font-weight:400;">__:__</div>
<div class="t" style="left:669.6px;top:422.57px;font-size:7.05px;line-height:11.05px;color:#4189a8;font-weight:400;">AM</div>
<svg style="left:690.00px;top:423.30px" width="8" height="8" viewBox="0 0 8 8"><circle cx="4" cy="4" r="3.400" fill="none" stroke="#c4c4c4" stroke-width=".8"/><path d="M4 2.100V4.200h1.500" fill="none" stroke="#c4c4c4" stroke-width=".8"/></svg>
<div class="b" style="left:642px;top:440px;width:58.60000000000002px;height:14.1px;border:1px dotted #dadada;border-radius:2.5px;background:#fff;"></div>
<div class="t" style="left:646.9px;top:435.8px;font-size:5.5px;line-height:6.4px;color:#666;background:#fff;padding:0 1.5px;">Depart</div>
<div class="t" style="left:654px;top:441.88px;font-size:7.05px;line-height:11.05px;color:#4189a8;font-weight:400;">__:__</div>
<div class="t" style="left:669.6px;top:441.88px;font-size:7.05px;line-height:11.05px;color:#4189a8;font-weight:400;">AM</div>
<svg style="left:690.00px;top:442.90px" width="8" height="8" viewBox="0 0 8 8"><circle cx="4" cy="4" r="3.400" fill="none" stroke="#c4c4c4" stroke-width=".8"/><path d="M4 2.100V4.200h1.500" fill="none" stroke="#c4c4c4" stroke-width=".8"/></svg>
<div class="b" style="left:705.2px;top:400.4px;width:102.69999999999993px;height:15px;border:1.2px solid #3a9ab8;border-radius:2.5px;background:#effaf3;"></div>
<div class="t" style="left:709.5px;top:396.2px;font-size:5.5px;line-height:6.4px;color:#3a8fb0;background:#fff;padding:0 1.5px;">Location</div>
<div class="b" style="left:709.3px;top:404.4px;width:0.8px;height:7.2px;background:#222;"></div>
<svg style="left:798.9000000000001px;top:405.79999999999995px" width="4.600" height="3.400" viewBox="0 0 4.600 3.400"><path d="M0 0h4.600L2.300 3.400z" fill="#222"/></svg>
<div class="b" style="left:451.6px;top:485.6px;width:58.69999999999999px;height:14.1px;border:1px dotted #dadada;border-radius:2.5px;background:#fff;"></div>
<div class="t" style="left:456.5px;top:481.40000000000003px;font-size:5.5px;line-height:6.4px;color:#666;background:#fff;padding:0 1.5px;">Assigned</div>
<div class="t" style="left:459.8px;top:487.68px;font-size:7.05px;line-height:11.05px;color:#666;font-weight:400;">04/03/2026</div>
<svg style="left:500.40px;top:488.10px" width="8.2" height="8.6" viewBox="0 0 8.2 8.6"><rect x=".6" y="1.400" width="7" height="6.700" rx=".8" fill="none" stroke="#333" stroke-width="1"/><path d="M.6 3.300h7" stroke="#333" stroke-width=".9"/><path d="M2.400 .2v1.800M5.800 .2v1.800" stroke="#333" stroke-width="1"/><rect x="4.400" y="4.800" width="2.200" height="2.200" fill="#333"/></svg>
<div class="b" style="left:451.6px;top:505.2px;width:122.89999999999998px;height:14.1px;border:1px dotted #dadada;border-radius:2.5px;background:#fff;"></div>
<div class="t" style="left:456.5px;top:501.0px;font-size:5.5px;line-height:6.4px;color:#666;background:#fff;padding:0 1.5px;">Driver</div>
<div class="t" style="left:456px;top:507.05px;font-size:6.9px;line-height:10.9px;color:#555;font-weight:400;">Hillebrand, Colton</div>
<svg style="left:565.7px;top:510.6px" width="4.600" height="3.400" viewBox="0 0 4.600 3.400"><path d="M0 0h4.600L2.300 3.400z" fill="#222"/></svg>
<div class="b" style="left:451.6px;top:524.8px;width:122.89999999999998px;height:14.1px;border:1px dotted #dadada;border-radius:2.5px;background:#fff;"></div>
<div class="t" style="left:456px;top:526.30px;font-size:7.6px;line-height:11.6px;color:#666;font-weight:400;">Codriver</div>
<svg style="left:565.7px;top:530.1999999999999px" width="4.600" height="3.400" viewBox="0 0 4.600 3.400"><path d="M0 0h4.600L2.300 3.400z" fill="#222"/></svg>
<div class="b" style="left:451.6px;top:544.4px;width:58.69999999999999px;height:14.1px;border:1px dotted #dadada;border-radius:2.5px;background:#fff;"></div>
<div class="t" style="left:456.5px;top:540.1999999999999px;font-size:5.5px;line-height:6.4px;color:#666;background:#fff;padding:0 1.5px;">Truck</div>
<div class="t" style="left:456px;top:546.35px;font-size:6.9px;line-height:10.9px;color:#555;font-weight:400;">KEN016</div>
<svg style="left:502.09999999999997px;top:549.8px" width="4.600" height="3.400" viewBox="0 0 4.600 3.400"><path d="M0 0h4.600L2.300 3.400z" fill="#222"/></svg>
<div class="b" style="left:515px;top:544.4px;width:59.5px;height:14.1px;border:1px dotted #dadada;border-radius:2.5px;background:#fff;"></div>
<div class="t" style="left:519.6px;top:546.00px;font-size:7.6px;line-height:11.6px;color:#666;font-weight:400;">Drop Trailer</div>
<svg style="left:565.7px;top:549.8px" width="4.600" height="3.400" viewBox="0 0 4.600 3.400"><path d="M0 0h4.600L2.300 3.400z" fill="#222"/></svg>
<div class="b" style="left:451.6px;top:564px;width:58.69999999999999px;height:14.1px;border:1px dotted #dadada;border-radius:2.5px;background:#fff;"></div>
<div class="t" style="left:456.5px;top:559.8px;font-size:5.5px;line-height:6.4px;color:#666;background:#fff;padding:0 1.5px;">Loaded Miles</div>
<div class="t" style="left:481.5px;top:565.85px;font-size:6.9px;line-height:10.9px;color:#4189a8;font-weight:400;transform:translateX(-50%);">1,857</div>
<div class="b" style="left:515px;top:564px;width:59.5px;height:14.1px;border:1px dotted #dadada;border-radius:2.5px;background:#fff;"></div>
<div class="t" style="left:519.9px;top:559.8px;font-size:5.5px;line-height:6.4px;color:#666;background:#fff;padding:0 1.5px;">Empty Miles</div>
<div class="t" style="left:545px;top:565.85px;font-size:6.9px;line-height:10.9px;color:#4189a8;font-weight:400;transform:translateX(-50%);">0</div>
<div class="b" style="left:580px;top:485.6px;width:58.60000000000002px;height:14.1px;border:1px dotted #dadada;border-radius:2.5px;background:#fff;"></div>
<div class="t" style="left:584.9px;top:481.40000000000003px;font-size:5.5px;line-height:6.4px;color:#666;background:#fff;padding:0 1.5px;">Loaded Pay By</div>
<div class="t" style="left:584.4px;top:487.25px;font-size:6.9px;line-height:10.9px;color:#555;font-weight:400;">Miles</div>
<svg style="left:629.1px;top:490.79999999999995px" width="4.600" height="3.400" viewBox="0 0 4.600 3.400"><path d="M0 0h4.600L2.300 3.400z" fill="#222"/></svg>
<div class="b" style="left:643px;top:485.6px;width:59px;height:14.1px;border:1px dotted #dadada;border-radius:2.5px;background:#fff;"></div>
<div class="t" style="left:647.9px;top:481.40000000000003px;font-size:5.5px;line-height:6.4px;color:#666;background:#fff;padding:0 1.5px;">Empty Pay By</div>
<div class="t" style="left:647.4px;top:487.25px;font-size:6.9px;line-height:10.9px;color:#555;font-weight:400;">Miles</div>
<svg style="left:693.3000000000001px;top:490.79999999999995px" width="4.600" height="3.400" viewBox="0 0 4.600 3.400"><path d="M0 0h4.600L2.300 3.400z" fill="#222"/></svg>
<div class="b" style="left:580px;top:505.2px;width:58.60000000000002px;height:14.1px;border:1px dotted #dadada;border-radius:2.5px;background:#fff;"></div>
<div class="t" style="left:584.9px;top:501.0px;font-size:5.5px;line-height:6.4px;color:#666;background:#fff;padding:0 1.5px;">Loaded Rate</div>
<div class="t" style="left:609.4px;top:507.05px;font-size:6.9px;line-height:10.9px;color:#555;font-weight:400;transform:translateX(-50%);">1.25</div>
<div class="b" style="left:643px;top:505.2px;width:59px;height:14.1px;border:1px dotted #dadada;border-radius:2.5px;background:#fff;"></div>
<div class="t" style="left:647.9px;top:501.0px;font-size:5.5px;line-height:6.4px;color:#666;background:#fff;padding:0 1.5px;">Empty Rate</div>
<div class="t" style="left:679px;top:507.05px;font-size:6.9px;line-height:10.9px;color:#555;font-weight:400;transform:translateX(-100%);">0.50</div>
<div class="b" style="left:580px;top:524.8px;width:58.60000000000002px;height:14.1px;border:1px dotted #dadada;border-radius:2.5px;background:#fff;"></div>
<div class="t" style="left:584.9px;top:520.5999999999999px;font-size:5.5px;line-height:6.4px;color:#666;background:#fff;padding:0 1.5px;">Loaded Miles</div>
<div class="t" style="left:609.4px;top:526.65px;font-size:6.9px;line-height:10.9px;color:#555;font-weight:400;transform:translateX(-50%);">1,857</div>
<div class="b" style="left:643px;top:524.8px;width:59px;height:14.1px;border:1px dotted #dadada;border-radius:2.5px;background:#fff;"></div>
<div class="t" style="left:647.9px;top:520.5999999999999px;font-size:5.5px;line-height:6.4px;color:#666;background:#fff;padding:0 1.5px;">Empty Miles</div>
<div class="t" style="left:673px;top:526.65px;font-size:6.9px;line-height:10.9px;color:#555;font-weight:400;transform:translateX(-50%);">0</div>
<div class="b" style="left:580px;top:544.4px;width:58.60000000000002px;height:14.1px;border:1px dotted #dadada;border-radius:2.5px;background:#fff;"></div>
<div class="t" style="left:584.9px;top:540.1999999999999px;font-size:5.5px;line-height:6.4px;color:#666;background:#fff;padding:0 1.5px;">Loaded Pay</div>
<div class="t" style="left:609.6px;top:546.35px;font-size:6.9px;line-height:10.9px;color:#4189a8;font-weight:400;transform:translateX(-50%);">2,321.25</div>
<div class="b" style="left:643px;top:544.4px;width:59px;height:14.1px;border:1px dotted #dadada;border-radius:2.5px;background:#fff;"></div>
<div class="t" style="left:647.9px;top:540.1999999999999px;font-size:5.5px;line-height:6.4px;color:#666;background:#fff;padding:0 1.5px;">Empty Pay</div>
<div class="t" style="left:679px;top:546.35px;font-size:6.9px;line-height:10.9px;color:#4189a8;font-weight:400;transform:translateX(-100%);">0.00</div>
<div class="b" style="left:580px;top:564px;width:122px;height:14.1px;border:1px dotted #dadada;border-radius:2.5px;background:#fff;"></div>
<div class="t" style="left:584.9px;top:559.8px;font-size:5.5px;line-height:6.4px;color:#666;background:#fff;padding:0 1.5px;">Total Pay</div>
<div class="t" style="left:641px;top:565.85px;font-size:6.9px;line-height:10.9px;color:#4189a8;font-weight:400;transform:translateX(-50%);">2,321.25</div>
<div class="b" style="left:706.4px;top:416.4px;width:268.80000000000007px;height:131.80000000000007px;background:#fff;border:1px solid #d2d2d2;box-shadow:0 1px 3px rgba(0,0,0,.22);overflow:hidden;">
<div class="b" style="left:0;top:-0.60px;width:261px;height:12.18px;background:#fff;border-bottom:0.8px solid #e6e6e6;"></div>
<div class="t" style="left:4.4px;top:-0.90px;font-size:5.45px;line-height:12.18px;color:#555;">Alleg Pipe &amp; Supply Co</div>
<div class="t" style="left:91.6px;top:-0.90px;font-size:5.45px;line-height:12.18px;color:#555;">3 Lewis Ave</div>
<div class="t" style="left:178.5px;top:-0.90px;font-size:5.45px;line-height:12.18px;color:#555;">Coraopolis</div>
<div class="t" style="left:243.4px;top:-0.90px;font-size:5.45px;line-height:12.18px;color:#555;">PA</div>
<div class="b" style="left:0;top:11.58px;width:261px;height:12.18px;background:#f5f5f5;border-bottom:0.8px solid #e6e6e6;"></div>
<div class="t" style="left:4.4px;top:11.28px;font-size:5.45px;line-height:12.18px;color:#555;">Apex Transport Group</div>
<div class="t" style="left:91.6px;top:11.28px;font-size:5.45px;line-height:12.18px;color:#555;">1155 Dairy Ashford Rd</div>
<div class="t" style="left:178.5px;top:11.28px;font-size:5.45px;line-height:12.18px;color:#555;">Houston</div>
<div class="t" style="left:243.4px;top:11.28px;font-size:5.45px;line-height:12.18px;color:#555;">TX</div>
<div class="b" style="left:0;top:23.76px;width:261px;height:12.18px;background:#fff;border-bottom:0.8px solid #e6e6e6;"></div>
<div class="t" style="left:4.4px;top:23.46px;font-size:5.45px;line-height:12.18px;color:#555;">ASAP Logistics</div>
<div class="t" style="left:91.6px;top:23.46px;font-size:5.45px;line-height:12.18px;color:#555;">100 Commerce Dr NE Suite A</div>
<div class="t" style="left:178.5px;top:23.46px;font-size:5.45px;line-height:12.18px;color:#555;">Columbia</div>
<div class="t" style="left:243.4px;top:23.46px;font-size:5.45px;line-height:12.18px;color:#555;">SC</div>
<div class="b" style="left:0;top:35.94px;width:261px;height:12.18px;background:#f5f5f5;border-bottom:0.8px solid #e6e6e6;"></div>
<div class="t" style="left:4.4px;top:35.64px;font-size:5.45px;line-height:12.18px;color:#555;">Baum's Lumber &amp; Materials</div>
<div class="t" style="left:91.6px;top:35.64px;font-size:5.45px;line-height:12.18px;color:#555;">508 W Spence St</div>
<div class="t" style="left:178.5px;top:35.64px;font-size:5.45px;line-height:12.18px;color:#555;">Colby</div>
<div class="t" style="left:243.4px;top:35.64px;font-size:5.45px;line-height:12.18px;color:#555;">WI</div>
<div class="b" style="left:0;top:48.12px;width:261px;height:12.18px;background:#fff;border-bottom:0.8px solid #e6e6e6;"></div>
<div class="t" style="left:4.4px;top:47.82px;font-size:5.45px;line-height:12.18px;color:#555;">Bay Distribution Co</div>
<div class="t" style="left:91.6px;top:47.82px;font-size:5.45px;line-height:12.18px;color:#555;">1841 Massaro Blvd</div>
<div class="t" style="left:178.5px;top:47.82px;font-size:5.45px;line-height:12.18px;color:#555;">Tampa</div>
<div class="t" style="left:243.4px;top:47.82px;font-size:5.45px;line-height:12.18px;color:#555;">FL</div>
<div class="b" style="left:0;top:60.30px;width:261px;height:12.18px;background:#c6dbf6;border-bottom:0.8px solid #e6e6e6;"></div>
<div class="t" style="left:4.4px;top:60.00px;font-size:5.45px;line-height:12.18px;color:#555;">Beacon Building Products</div>
<div class="t" style="left:91.6px;top:60.00px;font-size:5.45px;line-height:12.18px;color:#555;">5602 Central Texas Drive</div>
<div class="t" style="left:178.5px;top:60.00px;font-size:5.45px;line-height:12.18px;color:#555;">San Marcos</div>
<div class="t" style="left:243.4px;top:60.00px;font-size:5.45px;line-height:12.18px;color:#555;">TX</div>
<div class="b" style="left:0;top:72.48px;width:261px;height:12.18px;background:#fff;border-bottom:0.8px solid #e6e6e6;"></div>
<div class="t" style="left:4.4px;top:72.18px;font-size:5.45px;line-height:12.18px;color:#555;">Bee Logistics</div>
<div class="t" style="left:91.6px;top:72.18px;font-size:5.45px;line-height:12.18px;color:#555;">13148 NW 104th Terrace</div>
<div class="t" style="left:178.5px;top:72.18px;font-size:5.45px;line-height:12.18px;color:#555;">The Woodlands</div>
<div class="t" style="left:243.4px;top:72.18px;font-size:5.45px;line-height:12.18px;color:#555;">TX</div>
<div class="b" style="left:0;top:84.66px;width:261px;height:12.18px;background:#f5f5f5;border-bottom:0.8px solid #e6e6e6;"></div>
<div class="t" style="left:4.4px;top:84.36px;font-size:5.45px;line-height:12.18px;color:#555;">Billy's Lumber</div>
<div class="t" style="left:91.6px;top:84.36px;font-size:5.45px;line-height:12.18px;color:#555;">1595 Tenaha St</div>
<div class="t" style="left:178.5px;top:84.36px;font-size:5.45px;line-height:12.18px;color:#555;">Center</div>
<div class="t" style="left:243.4px;top:84.36px;font-size:5.45px;line-height:12.18px;color:#555;">TX</div>
<div class="b" style="left:0;top:96.84px;width:261px;height:12.18px;background:#fff;border-bottom:0.8px solid #e6e6e6;"></div>
<div class="t" style="left:4.4px;top:96.54px;font-size:5.45px;line-height:12.18px;color:#555;">Certainteed Corporation</div>
<div class="t" style="left:91.6px;top:96.54px;font-size:5.45px;line-height:12.18px;color:#555;">620 Aero Drive</div>
<div class="t" style="left:178.5px;top:96.54px;font-size:5.45px;line-height:12.18px;color:#555;">Shreveport</div>
<div class="t" style="left:243.4px;top:96.54px;font-size:5.45px;line-height:12.18px;color:#555;">LA</div>
<div class="b" style="left:0;top:109.02px;width:261px;height:12.18px;background:#f5f5f5;border-bottom:0.8px solid #e6e6e6;"></div>
<div class="t" style="left:4.4px;top:108.72px;font-size:5.45px;line-height:12.18px;color:#555;">Charters Logistics</div>
<div class="t" style="left:91.6px;top:108.72px;font-size:5.45px;line-height:12.18px;color:#555;">1910 Pacific Ave</div>
<div class="t" style="left:178.5px;top:108.72px;font-size:5.45px;line-height:12.18px;color:#555;">Dallas</div>
<div class="t" style="left:243.4px;top:108.72px;font-size:5.45px;line-height:12.18px;color:#555;">TX</div>
<div class="b" style="left:0;top:121.20px;width:261px;height:12.18px;background:#fff;border-bottom:0.8px solid #e6e6e6;"></div>
<div class="t" style="left:4.4px;top:120.90px;font-size:5.45px;line-height:12.18px;color:#555;">CNC Metals</div>
<div class="t" style="left:91.6px;top:120.90px;font-size:5.45px;line-height:12.18px;color:#555;">GVEC Power Tower Electric V...</div>
<div class="t" style="left:178.5px;top:120.90px;font-size:5.45px;line-height:12.18px;color:#555;">Seguin</div>
<div class="t" style="left:243.4px;top:120.90px;font-size:5.45px;line-height:12.18px;color:#555;">TX</div>
<div class="b" style="left:87.2px;top:0;width:0.9px;height:140px;background:#e2e2e2;"></div>
<div class="b" style="left:174px;top:0;width:0.9px;height:140px;background:#e2e2e2;"></div>
<div class="b" style="left:239px;top:0;width:0.9px;height:140px;background:#e2e2e2;"></div>
<div class="b" style="left:261px;top:0;width:7px;height:140px;background:#fff;"></div>
<svg style="left:262.200px;top:2.600px" width="4.400" height="3.200" viewBox="0 0 4.400 3.200"><path d="M0 3.200h4.400L2.200 0z" fill="#555"/></svg>
<div class="b" style="left:262.600px;top:7.600px;width:3.400px;height:22px;background:#7d7d7d;border-radius:1.700px;"></div>
<svg style="left:262.200px;top:125.600px" width="4.400" height="3.200" viewBox="0 0 4.400 3.200"><path d="M0 0h4.400L2.200 3.200z" fill="#555"/></svg>
</div>
</body></html>
